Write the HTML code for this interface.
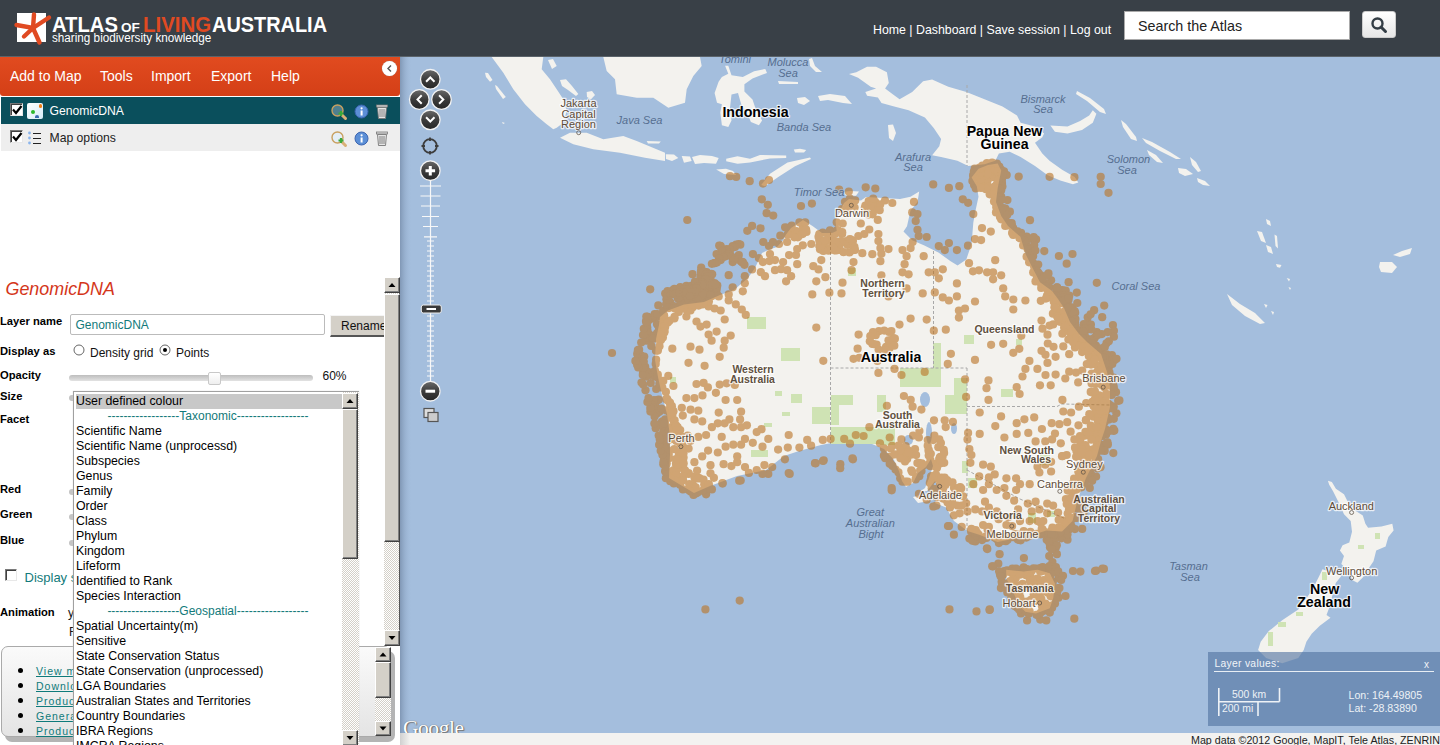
<!DOCTYPE html>
<html><head><meta charset="utf-8">
<style>
*{margin:0;padding:0;box-sizing:border-box}
html,body{width:1440px;height:745px;overflow:hidden;background:#fff;font-family:"Liberation Sans",sans-serif}
.abs{position:absolute}
.t{position:absolute;white-space:nowrap;line-height:1}
#hdr{position:absolute;left:0;top:0;width:1440px;height:56px;background:#394047}
#hdrline{position:absolute;left:0;top:56px;width:1440px;height:1px;background:#5b636a}
#menu{position:absolute;left:0;top:57px;width:400px;height:39px;background:linear-gradient(#e14b1f,#d43f17);border-radius:0 0 3px 3px}
#menu .t{color:#fff;font-size:14px}
.row1{position:absolute;left:1px;top:97px;width:399px;height:27px;background:#0a4f5c}
.row2{position:absolute;left:1px;top:124px;width:399px;height:27px;background:#eeeeee}
.cb{position:absolute;width:13px;height:13px;background:#fff;border:1px solid #777;border-right-color:#e8e8e8;border-bottom-color:#e8e8e8;box-shadow:inset 1px 1px 0 #404040}
.lbl{position:absolute;font-weight:bold;font-size:11.2px;color:#000;white-space:nowrap;line-height:1}
.sel .t{font-size:12px;color:#000}
.sbtn{background:#d4d0c8;border-top:1px solid #fff;border-left:1px solid #fff;border-right:1px solid #404040;border-bottom:1px solid #404040;box-shadow:inset -1px -1px 0 #808080}
.lnk{position:absolute;left:36px;font-size:10.5px;letter-spacing:1px;color:#0e7a7a;text-decoration:underline;white-space:nowrap;line-height:1}
</style></head>
<body>
<div id="hdr"></div>
<div id="hdrline"></div>
<!-- logo -->
<div class="abs" style="left:17px;top:13px;width:29px;height:29px;background:#fff"></div>
<svg class="abs" style="left:0;top:0" width="60" height="50" viewBox="0 0 60 50">
 <g stroke="#e04a22" stroke-width="4.4" stroke-linecap="round" fill="none">
  <path d="M16.5 25 L33 28 L49 17.5"/><path d="M33 28 L34 14.5"/><path d="M33 28 L39.5 42.5"/><path d="M33 28 L24 36.5"/>
 </g>
</svg>
<div class="t" style="left:52px;top:13.5px;font-size:22px;font-weight:bold;color:#fff;transform:scaleX(0.92);transform-origin:0 0">ATLAS</div>
<div class="t" style="left:121px;top:20.5px;font-size:13px;font-weight:bold;color:#fff;transform:scaleX(1.05);transform-origin:0 0">OF</div>
<div class="t" style="left:142.5px;top:13.5px;font-size:22px;font-weight:bold;color:#e04a22;transform:scaleX(0.93);transform-origin:0 0">LIVING</div>
<div class="t" style="left:212px;top:13.5px;font-size:22px;font-weight:bold;color:#fff;transform:scaleX(0.905);transform-origin:0 0">AUSTRALIA</div>
<div class="t" style="left:52px;top:32px;font-size:12px;color:#fff;transform:scaleX(0.975);transform-origin:0 0">sharing biodiversity knowledge</div>
<!-- nav -->
<div class="t" style="left:873px;top:24px;font-size:12.35px;color:#fff">Home | Dashboard | Save session | Log out</div>
<div class="abs" style="left:1124px;top:11px;width:226px;height:29px;background:#fff;border:1px solid #aaa"></div>
<div class="t" style="left:1138px;top:19px;font-size:14.3px;color:#222">Search the Atlas</div>
<div class="abs" style="left:1362px;top:11px;width:34px;height:27px;background:linear-gradient(#fff,#e6e6e6);border-radius:3px;border:1px solid #ccc"></div>
<svg class="abs" style="left:1368px;top:14px" width="22" height="22" viewBox="0 0 22 22"><circle cx="9.5" cy="9.5" r="5" fill="none" stroke="#333d45" stroke-width="2.4"/><path d="M13 13 L17.5 17.5" stroke="#333d45" stroke-width="3" stroke-linecap="round"/></svg>

<!-- menu -->
<div id="menu">
 <div class="t" style="left:10px;top:12px">Add to Map</div>
 <div class="t" style="left:100px;top:12px">Tools</div>
 <div class="t" style="left:151px;top:12px">Import</div>
 <div class="t" style="left:211px;top:12px">Export</div>
 <div class="t" style="left:271px;top:12px">Help</div>
 <div class="abs" style="left:382px;top:4px;width:15px;height:15px;border-radius:50%;background:#fff;box-shadow:0 0 1px #999"></div>
 <svg class="abs" style="left:384px;top:6px" width="11" height="11"><path d="M7 2.5 L4 5.5 L7 8.5" stroke="#555" stroke-width="1.4" fill="none"/></svg>
</div>

<!-- layer rows -->
<div class="row1"></div>
<div class="row2"></div>
<div class="cb" style="left:10px;top:103px"></div>
<div class="cb" style="left:10px;top:130px"></div>


<!-- row icons -->
<svg class="abs" style="left:10px;top:103px" width="14" height="14"><path d="M3 6.5 L6 10 L11.5 3" stroke="#000" stroke-width="2.2" fill="none"/></svg>
<svg class="abs" style="left:10px;top:130px" width="14" height="14"><path d="M3 6.5 L6 10 L11.5 3" stroke="#000" stroke-width="2.2" fill="none"/></svg>
<div class="abs" style="left:27px;top:103px;width:16px;height:16px;border-radius:2px;background:linear-gradient(135deg,#ffffff,#d6ecf8)"></div>
<div class="abs" style="left:38.5px;top:104px;width:3.5px;height:3.5px;border-radius:50%;background:#f07c10"></div>
<div class="abs" style="left:31px;top:110px;width:4px;height:4px;border-radius:50%;background:#2eb82e"></div>
<div class="abs" style="left:35px;top:115px;width:4px;height:3px;border-radius:2px 2px 0 0;background:#3a6ab0"></div>
<div class="t" style="left:49.5px;top:104.5px;font-size:12.2px;color:#fff">GenomicDNA</div>
<svg class="abs" style="left:27px;top:131px" width="16" height="16">
 <g fill="#8ab4ec"><circle cx="2.5" cy="2" r="1.4"/><circle cx="2.5" cy="7" r="1.4"/><circle cx="2.5" cy="12" r="1.4"/></g>
 <g stroke="#222" stroke-width="1"><path d="M6 2.5 H14 M6 7.5 H14 M6 12.5 H14"/></g>
</svg>
<div class="t" style="left:49.5px;top:131.5px;font-size:12.2px;color:#222">Map options</div>
<!-- right icons -->
<svg class="abs" style="left:330px;top:103px" width="18" height="18"><circle cx="7.5" cy="7.5" r="5.5" fill="#4f7f8f" stroke="#c9a060" stroke-width="1.4"/><path d="M11 11 L15.5 15.5" stroke="#d8b078" stroke-width="3" stroke-linecap="round"/><path d="M8.5 10.5 H13.5 M11 8 V13" stroke="#39a839" stroke-width="2.2"/></svg>
<svg class="abs" style="left:330px;top:130px" width="18" height="18"><circle cx="7.5" cy="7.5" r="5.5" fill="#e4eef6" stroke="#c9a060" stroke-width="1.4"/><path d="M11 11 L15.5 15.5" stroke="#d8b078" stroke-width="3" stroke-linecap="round"/><path d="M8.5 10.5 H13.5 M11 8 V13" stroke="#39a839" stroke-width="2.2"/></svg>
<svg class="abs" style="left:354px;top:104px" width="15" height="15"><circle cx="7.5" cy="7.5" r="6.5" fill="#5b8fd6" stroke="#3a64b0" stroke-width="1"/><rect x="6.6" y="6.5" width="2" height="5" fill="#fff"/><circle cx="7.6" cy="4.3" r="1.1" fill="#fff"/></svg>
<svg class="abs" style="left:354px;top:131px" width="15" height="15"><circle cx="7.5" cy="7.5" r="6.5" fill="#5b8fd6" stroke="#3a64b0" stroke-width="1"/><rect x="6.6" y="6.5" width="2" height="5" fill="#fff"/><circle cx="7.6" cy="4.3" r="1.1" fill="#fff"/></svg>
<svg class="abs" style="left:375px;top:103px" width="14" height="17"><rect x="1.5" y="2" width="11" height="2" fill="#ddd" stroke="#777" stroke-width=".8"/><path d="M2.5 4.5 L3.5 15.5 H10.5 L11.5 4.5 Z" fill="#e6e6e6" stroke="#777" stroke-width=".9"/><path d="M5 6 V14 M7 6 V14 M9 6 V14" stroke="#777" stroke-width=".9"/></svg>
<svg class="abs" style="left:375px;top:130px" width="14" height="17"><rect x="1.5" y="2" width="11" height="2" fill="#ddd" stroke="#777" stroke-width=".8"/><path d="M2.5 4.5 L3.5 15.5 H10.5 L11.5 4.5 Z" fill="#e6e6e6" stroke="#777" stroke-width=".9"/><path d="M5 6 V14 M7 6 V14 M9 6 V14" stroke="#777" stroke-width=".9"/></svg>

<!-- form area -->
<div class="t" style="left:5.5px;top:281.2px;font-size:17.9px;font-style:italic;color:#d4361a">GenomicDNA</div>
<div class="lbl" style="left:0;top:316px">Layer name</div>
<div class="abs" style="left:70px;top:314px;width:255px;height:21px;border:1px solid #bbb;border-radius:2px;background:#fff"></div>
<div class="t" style="left:75.5px;top:319px;font-size:12px;color:#127a7a">GenomicDNA</div>
<div class="abs" style="left:330px;top:314.5px;width:60px;height:22px;background:#d4d0c8;border-top:1px solid #f4f4f4;border-left:1px solid #f4f4f4;border-bottom:2px solid #555;"></div>
<div class="t" style="left:341px;top:320px;font-size:12px;color:#111">Rename</div>
<div class="lbl" style="left:0;top:346px">Display as</div>
<svg class="abs" style="left:73px;top:344px" width="13" height="13"><circle cx="6" cy="6" r="5" fill="#fff" stroke="#666" stroke-width="1"/></svg>
<div class="t" style="left:90px;top:347px;font-size:12px;color:#111">Density grid</div>
<svg class="abs" style="left:159px;top:344px" width="13" height="13"><circle cx="6" cy="6" r="5" fill="#fff" stroke="#666" stroke-width="1"/><circle cx="6" cy="6" r="2" fill="#000"/></svg>
<div class="t" style="left:176px;top:347px;font-size:12px;color:#111">Points</div>
<div class="lbl" style="left:0;top:370px">Opacity</div>
<div class="abs" style="left:69px;top:375px;width:244px;height:6px;border-radius:3px;background:linear-gradient(#bdbdbd,#e2e2e2)"></div>
<div class="abs" style="left:208px;top:371.5px;width:13px;height:13px;border:1px solid #c8c8c8;border-radius:2px;background:linear-gradient(#fff,#eee)"></div>
<div class="t" style="left:322.5px;top:369.5px;font-size:12px;color:#111">60%</div>
<div class="lbl" style="left:0;top:391px">Size</div>
<div class="lbl" style="left:0;top:413.5px">Facet</div>
<div class="lbl" style="left:0;top:483.5px">Red</div>
<div class="lbl" style="left:0;top:508.5px">Green</div>
<div class="lbl" style="left:0;top:534.5px">Blue</div>
<div class="abs" style="left:69px;top:395px;width:8px;height:6px;border-radius:3px;background:#c4c4c4"></div>
<div class="abs" style="left:69px;top:489px;width:8px;height:6px;border-radius:3px;background:#c4c4c4"></div>
<div class="abs" style="left:69px;top:514px;width:8px;height:6px;border-radius:3px;background:#c4c4c4"></div>
<div class="abs" style="left:69px;top:540px;width:8px;height:6px;border-radius:3px;background:#c4c4c4"></div>
<div class="abs" style="left:4.5px;top:568.5px;width:12px;height:12px;border:1px solid #7a7a7a;border-right-color:#e8e8e8;border-bottom-color:#e8e8e8;box-shadow:inset 1px 1px 0 #404040;background:#fff"></div>
<div class="t" style="left:24.5px;top:571px;font-size:13px;color:#127a7a">Display s</div>
<div class="lbl" style="left:0;top:607px">Animation</div>
<div class="t" style="left:68px;top:607px;font-size:12px;color:#111">y</div>
<div class="t" style="left:69px;top:626px;font-size:12px;color:#111">F</div>
<!-- panel scrollbar -->
<div class="abs" style="left:384px;top:277px;width:16px;height:369px;background:repeating-conic-gradient(#d4d0c8 0 25%,#ffffff 0 50%) 0 0/2px 2px;border-right:1px solid #555"></div>
<div class="sbtn abs" style="left:384px;top:277px;width:16px;height:16px"></div>
<div class="sbtn abs" style="left:384px;top:293.5px;width:16px;height:248px"></div>
<div class="sbtn abs" style="left:384px;top:630px;width:16px;height:16px"></div>
<svg class="abs" style="left:384px;top:277px" width="16" height="16"><path d="M4.5 10 L8 6 L11.5 10 Z" fill="#000"/></svg>
<svg class="abs" style="left:384px;top:630px" width="16" height="16"><path d="M4.5 6 L8 10 L11.5 6 Z" fill="#000"/></svg>

<!-- links box -->
<div class="abs" style="left:5px;top:651px;width:390px;height:91px;border-radius:7px;background:#b4b4b4"></div>
<div class="abs" style="left:1px;top:646px;width:390px;height:91px;border-radius:7px;border:1px solid #aaa;background:linear-gradient(#fafafa,#e4e4e4)"></div>
<div class="abs" style="left:375px;top:647px;width:16px;height:89px;background:repeating-conic-gradient(#d4d0c8 0 25%,#ffffff 0 50%) 0 0/2px 2px"></div>
<div class="sbtn abs" style="left:375px;top:647px;width:16px;height:15px"></div>
<div class="sbtn abs" style="left:375px;top:662px;width:16px;height:36px"></div>
<div class="sbtn abs" style="left:375px;top:721px;width:16px;height:15px"></div>
<svg class="abs" style="left:375px;top:647px" width="16" height="15"><path d="M4.5 9.5 L8 5.5 L11.5 9.5 Z" fill="#000"/></svg>
<svg class="abs" style="left:375px;top:721px" width="16" height="15"><path d="M4.5 5.5 L8 9.5 L11.5 5.5 Z" fill="#000"/></svg>
<div class="abs" style="left:18px;top:667.5px;width:5px;height:5px;border-radius:50%;background:#000"></div>
<div class="abs" style="left:18px;top:682.5px;width:5px;height:5px;border-radius:50%;background:#000"></div>
<div class="abs" style="left:18px;top:697.5px;width:5px;height:5px;border-radius:50%;background:#000"></div>
<div class="abs" style="left:18px;top:712.5px;width:5px;height:5px;border-radius:50%;background:#000"></div>
<div class="abs" style="left:18px;top:727.5px;width:5px;height:5px;border-radius:50%;background:#000"></div>
<div class="lnk" style="top:665.5px">View metadata</div>
<div class="lnk" style="top:680.5px">Download</div>
<div class="lnk" style="top:695.5px">Produce</div>
<div class="lnk" style="top:710.5px">Generate</div>
<div class="lnk" style="top:725.5px">Produce</div>

<!-- listbox -->
<div class="abs sel" style="left:73px;top:390.5px;width:286px;height:360px;background:#fff;border:1px solid #a0a0a0;border-right:none;box-shadow:0 0 1px #ccc">
 <div class="abs" style="left:2px;top:2px;width:266px;height:15px;background:#c8c8c8"></div>
 <div class="t" style="left:2px;top:3.5px;font-size:12.35px;color:#000">User defined colour</div><div class="t" style="left:0;width:268px;text-align:center;top:18.5px;font-size:12px;color:#127a7a">------------------Taxonomic------------------</div><div class="t" style="left:2px;top:33.5px;font-size:12.35px;color:#000">Scientific Name</div><div class="t" style="left:2px;top:48.5px;font-size:12.35px;color:#000">Scientific Name (unprocessd)</div><div class="t" style="left:2px;top:63.5px;font-size:12.35px;color:#000">Subspecies</div><div class="t" style="left:2px;top:78.5px;font-size:12.35px;color:#000">Genus</div><div class="t" style="left:2px;top:93.5px;font-size:12.35px;color:#000">Family</div><div class="t" style="left:2px;top:108.5px;font-size:12.35px;color:#000">Order</div><div class="t" style="left:2px;top:123.5px;font-size:12.35px;color:#000">Class</div><div class="t" style="left:2px;top:138.5px;font-size:12.35px;color:#000">Phylum</div><div class="t" style="left:2px;top:153.5px;font-size:12.35px;color:#000">Kingdom</div><div class="t" style="left:2px;top:168.5px;font-size:12.35px;color:#000">Lifeform</div><div class="t" style="left:2px;top:183.5px;font-size:12.35px;color:#000">Identified to Rank</div><div class="t" style="left:2px;top:198.5px;font-size:12.35px;color:#000">Species Interaction</div><div class="t" style="left:0;width:268px;text-align:center;top:213.5px;font-size:12px;color:#127a7a">------------------Geospatial------------------</div><div class="t" style="left:2px;top:228.5px;font-size:12.35px;color:#000">Spatial Uncertainty(m)</div><div class="t" style="left:2px;top:243.5px;font-size:12.35px;color:#000">Sensitive</div><div class="t" style="left:2px;top:258.5px;font-size:12.35px;color:#000">State Conservation Status</div><div class="t" style="left:2px;top:273.5px;font-size:12.35px;color:#000">State Conservation (unprocessed)</div><div class="t" style="left:2px;top:288.5px;font-size:12.35px;color:#000">LGA Boundaries</div><div class="t" style="left:2px;top:303.5px;font-size:12.35px;color:#000">Australian States and Territories</div><div class="t" style="left:2px;top:318.5px;font-size:12.35px;color:#000">Country Boundaries</div><div class="t" style="left:2px;top:333.5px;font-size:12.35px;color:#000">IBRA Regions</div><div class="t" style="left:2px;top:348.5px;font-size:12.35px;color:#000">IMCRA Regions</div>
 <div class="abs" style="left:268px;top:0;width:17px;height:360px;background:repeating-conic-gradient(#d4d0c8 0 25%,#ffffff 0 50%) 0 0/2px 2px"></div>
 <div class="sbtn abs" style="left:268px;top:1px;width:16px;height:16px"></div>
 <div class="sbtn abs" style="left:268px;top:17px;width:16px;height:150px"></div>
 <div class="sbtn abs" style="left:268px;top:338px;width:16px;height:16px"></div>
 <svg class="abs" style="left:268px;top:1px" width="16" height="16"><path d="M4.5 10 L8 6 L11.5 10 Z" fill="#000"/></svg>
 <svg class="abs" style="left:268px;top:338px" width="16" height="16"><path d="M4.5 6 L8 10 L11.5 6 Z" fill="#000"/></svg>
</div>

<svg class="abs" style="left:400px;top:57px" width="1040" height="676" viewBox="400 57 1040 676">
<defs><linearGradient id="lsh" x1="0" x2="1"><stop offset="0" stop-color="#8097b5"/><stop offset="1" stop-color="#a4bedd" stop-opacity="0"/></linearGradient></defs>
<rect x="400" y="57" width="1040" height="676" fill="#a4bedd"/>
<polygon points="793.8,149.5 800.0,148.8 806.2,150.0 804.0,152.5 795.0,152.5" fill="#f3f2ee"/>
<polygon points="842.7,192.0 850.0,190.9 859.0,191.5 856.0,195.7 845.0,195.5" fill="#f3f2ee"/>
<polygon points="888.0,125.0 893.0,124.6 896.0,133.0 893.0,140.9 889.0,138.0" fill="#f3f2ee"/>
<polygon points="646.7,141.0 660.8,141.5 659.0,143.5 648.0,143.5" fill="#f3f2ee"/>
<polygon points="660.0,317.0 668.0,310.5 684.0,304.4 704.0,302.0 720.0,295.0 734.0,290.0 748.0,278.0 755.0,268.0 762.0,253.0 768.0,250.0 777.0,247.0 783.0,240.5 786.0,234.5 791.0,228.0 803.0,220.0 812.5,226.0 822.0,233.0 832.0,233.0 836.7,231.0 835.5,221.0 840.0,211.0 844.0,203.0 849.0,199.0 861.0,200.5 866.0,197.0 883.0,198.0 900.0,199.0 910.5,196.7 919.2,191.4 917.5,201.9 910.5,210.6 907.0,226.3 903.5,231.6 912.2,240.3 924.4,245.5 938.4,252.5 950.6,261.2 957.6,265.6 966.3,259.5 971.6,243.8 973.3,222.8 975.1,212.4 978.5,196.7 976.8,186.2 971.6,177.5 978.5,168.7 988.0,165.0 997.7,163.5 1001.2,170.5 997.7,187.9 996.0,201.9 1001.2,215.9 1008.0,226.0 1020.4,236.8 1025.7,254.3 1032.7,268.2 1040.0,282.2 1052.0,291.0 1058.0,299.0 1064.0,308.0 1070.0,322.0 1079.0,334.0 1087.0,342.0 1101.0,354.0 1107.0,372.0 1110.0,387.0 1110.0,407.0 1105.0,429.0 1101.0,441.0 1097.0,456.0 1086.0,478.0 1078.0,498.0 1074.0,515.0 1072.5,521.0 1062.0,531.4 1046.3,530.5 1032.4,534.9 1014.9,538.4 997.5,541.9 980.0,535.0 967.5,531.0 954.0,521.0 946.0,507.5 935.0,503.0 937.0,497.0 939.0,488.0 935.0,481.0 927.0,491.0 921.0,491.0 925.0,488.0 929.0,478.0 933.0,466.0 931.0,459.0 926.0,467.0 918.0,473.0 913.0,483.0 906.0,487.0 902.0,481.0 899.0,471.0 894.0,460.0 884.0,449.0 872.0,444.0 860.0,442.0 842.0,441.0 821.0,445.0 799.0,451.0 784.0,456.0 766.0,470.0 737.0,476.0 710.0,486.0 694.0,493.0 669.0,478.0 670.0,455.0 670.0,436.0 667.0,414.0 662.0,395.0 658.0,377.0 655.0,360.0 656.0,339.0 659.0,325.0" fill="#f3f2ee"/>
<polygon points="1006.2,569.8 1023.6,571.6 1037.6,569.8 1049.8,573.3 1055.0,583.8 1053.3,597.7 1049.8,608.2 1035.9,613.5 1025.4,611.7 1018.4,604.7 1011.4,587.3 1006.2,578.5" fill="#f3f2ee"/>
<polygon points="913.0,497.0 920.0,495.0 930.0,496.0 929.0,501.0 918.0,503.0" fill="#f3f2ee"/>
<polygon points="856.3,72.3 867.1,66.8 876.1,66.8 886.9,72.3 888.8,83.1 885.1,88.5 892.4,93.9 899.6,99.3 912.2,92.1 923.1,81.3 932.1,79.5 948.3,86.7 966.4,92.1 984.5,99.3 1002.5,106.6 1017.0,115.6 1020.6,122.8 1035.0,126.4 1044.1,133.6 1042.3,137.3 1035.0,142.7 1042.3,153.5 1049.5,160.7 1062.1,169.8 1074.7,177.0 1078.3,182.4 1072.9,184.2 1060.3,180.6 1047.7,175.2 1035.0,166.1 1020.6,157.1 1009.7,151.7 998.9,153.5 995.3,160.7 984.5,164.3 968.2,166.1 957.4,160.7 941.1,157.1 932.1,155.3 939.3,146.3 941.1,139.1 933.9,128.2 924.9,117.4 908.6,110.2 894.2,106.6 881.5,102.9 877.9,97.5 867.1,95.7 865.3,92.1 876.1,88.5 870.7,86.7 858.1,77.7 849.0,74.1" fill="#f3f2ee"/>
<polygon points="1050.4,125.5 1067.5,126.4 1080.1,121.0 1089.2,115.6 1092.8,110.2 1096.4,113.8 1092.8,122.8 1082.0,130.0 1067.5,133.6 1054.9,131.8" fill="#f3f2ee"/>
<polygon points="1077.0,91.0 1090.0,98.0 1104.0,109.0 1106.0,114.0 1100.0,112.0 1087.0,101.0 1076.0,94.0" fill="#f3f2ee"/>
<polygon points="491.7,57.0 503.3,72.7 513.3,89.3 525.0,104.3 536.7,116.0 546.7,124.3 553.3,129.3 556.7,127.7 563.3,122.7 566.7,111.0 563.3,99.3 556.7,89.3 550.0,79.3 541.7,69.3 543.3,57.0" fill="#f3f2ee"/>
<polygon points="560.0,80.0 566.0,79.3 572.0,86.0 578.3,94.0 576.0,96.0 568.0,90.0 562.0,86.0" fill="#f3f2ee"/>
<polygon points="586.7,92.0 592.0,91.0 595.0,95.0 591.0,99.3 587.0,97.0" fill="#f3f2ee"/>
<polygon points="603.3,57.0 606.7,71.0 615.0,79.3 616.7,94.3 636.7,97.7 653.3,97.7 668.3,107.7 685.0,102.7 686.7,89.3 693.3,76.0 701.7,66.0 700.0,57.0" fill="#f3f2ee"/>
<polygon points="560.0,137.7 570.0,132.7 586.7,132.7 603.3,139.3 623.3,136.0 636.7,141.0 665.0,152.7 665.0,161.0 645.0,157.7 620.0,152.7 593.3,149.3 573.3,144.3" fill="#f3f2ee"/>
<polygon points="665.8,154.3 674.0,154.5 678.3,158.0 672.0,161.0 666.0,159.0" fill="#f3f2ee"/>
<polygon points="681.7,156.0 690.0,156.5 691.7,161.0 684.0,162.7" fill="#f3f2ee"/>
<polygon points="692.0,157.0 700.0,155.0 712.0,156.0 718.7,158.0 716.0,163.7 704.0,163.0 695.0,164.0" fill="#f3f2ee"/>
<polygon points="726.2,158.8 737.5,156.2 750.0,158.8 760.0,155.0 786.2,155.6 786.2,158.1 770.0,158.5 750.0,162.5 737.5,163.8 726.2,161.2" fill="#f3f2ee"/>
<polygon points="716.2,169.5 726.0,168.8 733.0,171.0 736.2,175.0 724.0,174.0" fill="#f3f2ee"/>
<polygon points="761.2,185.0 770.0,173.8 787.5,162.5 810.0,157.5 811.0,159.0 795.0,166.2 777.5,177.5 765.0,186.2" fill="#f3f2ee"/>
<polygon points="725.1,65.7 728.3,73.7 721.9,76.9 718.6,81.8 714.6,93.0 717.0,102.7 721.9,104.3 720.3,112.4 721.9,125.2 728.3,126.9 731.5,120.4 729.9,109.1 731.5,94.6 738.0,93.0 741.2,104.3 747.6,114.0 750.9,122.0 758.9,125.2 762.1,120.4 755.7,109.1 752.5,99.5 744.4,91.4 744.4,84.2 752.5,78.5 767.0,72.9 765.3,68.9 754.1,71.3 742.8,76.9 731.5,75.3 728.3,65.7" fill="#f3f2ee"/>
<polygon points="809.0,59.0 812.0,58.0 815.0,66.0 822.0,72.0 816.0,72.0 810.0,66.0" fill="#f3f2ee"/>
<polygon points="818.0,96.0 830.0,94.0 845.0,96.0 852.0,104.0 843.0,103.0 828.0,100.0 820.0,101.0" fill="#f3f2ee"/>
<polygon points="797.0,98.0 805.0,97.0 810.0,101.0 804.0,105.0 798.0,103.0" fill="#f3f2ee"/>
<polygon points="778.0,81.0 798.0,82.0 798.0,84.0 779.0,84.0" fill="#f3f2ee"/>
<polygon points="1121.0,120.0 1126.0,124.0 1136.0,137.0 1137.0,141.0 1131.0,139.0 1123.0,127.0" fill="#f3f2ee"/>
<polygon points="1142.0,138.0 1152.0,142.0 1170.0,152.0 1181.0,159.0 1176.0,159.0 1160.0,151.0 1146.0,143.0" fill="#f3f2ee"/>
<polygon points="1190.0,157.0 1196.0,162.0 1201.0,171.0 1198.0,172.0 1192.0,165.0" fill="#f3f2ee"/>
<polygon points="1178.0,168.0 1186.0,169.0 1193.0,174.0 1185.0,176.0 1179.0,173.0" fill="#f3f2ee"/>
<polygon points="1197.0,178.0 1205.0,181.0 1210.0,186.0 1203.0,185.0 1198.0,182.0" fill="#f3f2ee"/>
<polygon points="1147.0,150.0 1156.0,155.0 1163.0,163.0 1157.0,162.0 1149.0,155.0" fill="#f3f2ee"/>
<polygon points="1227.0,294.0 1240.0,304.0 1255.0,313.0 1265.0,323.0 1260.0,324.0 1245.0,316.0 1232.0,305.0" fill="#f3f2ee"/>
<polygon points="1380.0,262.0 1392.0,262.0 1397.0,267.0 1392.0,273.0 1381.0,272.0 1379.0,267.0" fill="#f3f2ee"/>
<polygon points="1393.0,255.0 1402.0,251.0 1412.0,248.0 1410.0,254.0 1400.0,257.0" fill="#f3f2ee"/>
<polygon points="1327.9,480.7 1331.9,482.1 1335.9,488.8 1344.0,494.2 1348.0,502.2 1354.7,510.3 1362.8,515.6 1365.4,523.7 1368.1,527.7 1381.5,526.4 1392.3,523.7 1393.6,530.4 1388.3,537.1 1385.6,546.5 1376.2,550.5 1373.5,561.3 1368.1,569.3 1362.8,577.4 1357.4,582.8 1352.0,580.1 1349.3,572.0 1341.3,564.0 1344.0,555.9 1339.9,550.5 1342.6,545.2 1349.3,542.5 1352.0,531.7 1350.7,521.0 1344.0,514.3 1338.6,502.2 1333.2,491.5 1329.2,484.8" fill="#f3f2ee"/>
<polygon points="1322.5,569.3 1330.5,572.0 1341.3,576.0 1335.9,582.8 1333.2,590.8 1330.5,604.2 1326.5,615.0 1330.5,617.7 1319.8,625.7 1311.7,633.8 1306.4,641.8 1303.7,649.9 1298.3,657.9 1282.2,663.3 1266.1,657.9 1258.1,649.9 1260.7,641.8 1268.8,631.1 1282.2,620.3 1298.3,609.6 1311.7,590.8 1318.5,577.4" fill="#f3f2ee"/>
<polygon points="1257.0,231.0 1262.0,232.0 1266.0,243.0 1261.0,241.0" fill="#f3f2ee"/>
<polygon points="1266.0,245.0 1271.0,247.0 1273.0,254.0 1268.0,252.0" fill="#f3f2ee"/>
<polygon points="1274.5,234.5 1277.0,236.0 1278.0,248.5 1275.5,246.0" fill="#f3f2ee"/>
<polygon points="1276.0,264.0 1281.5,265.0 1280.0,267.7 1277.0,267.0" fill="#f3f2ee"/>
<polygon points="1286.7,278.0 1290.0,279.0 1289.0,281.6" fill="#f3f2ee"/>
<polygon points="1288.5,287.0 1291.0,288.0 1290.0,290.0" fill="#f3f2ee"/>
<polygon points="1266.0,219.0 1270.0,221.0 1271.0,226.0 1267.0,224.0" fill="#f3f2ee"/>
<polygon points="1264.0,304.0 1267.5,305.0 1266.0,308.0" fill="#f3f2ee"/>
<polygon points="1271.0,311.0 1274.0,312.0 1273.0,315.0" fill="#f3f2ee"/>
<polygon points="485.0,72.7 488.0,73.0 492.5,80.0 490.0,81.8 486.0,77.0" fill="#f3f2ee"/>
<polygon points="495.0,85.0 497.0,86.0 505.8,97.0 503.0,99.0 496.0,89.0" fill="#f3f2ee"/>
<polygon points="548.0,60.0 553.0,59.0 556.7,66.0 552.0,69.0" fill="#f3f2ee"/>
<polygon points="502.0,122.0 505.0,123.0 503.0,124.0" fill="#f3f2ee"/>
<rect x="747" y="317" width="19" height="12" fill="#cfe3b4"/>
<rect x="781" y="348" width="19" height="13" fill="#cfe3b4"/>
<rect x="812" y="407" width="18" height="17" fill="#cfe3b4"/>
<rect x="831" y="395" width="22" height="10" fill="#cfe3b4"/>
<rect x="831" y="395" width="8" height="30" fill="#cfe3b4"/>
<rect x="877" y="395" width="9" height="17" fill="#cfe3b4"/>
<rect x="791" y="394" width="11" height="9" fill="#cfe3b4"/>
<rect x="775" y="391" width="7" height="5" fill="#cfe3b4"/>
<rect x="670" y="377" width="6" height="6" fill="#cfe3b4"/>
<rect x="831" y="427" width="64" height="17" fill="#cfe3b4"/>
<rect x="751" y="450" width="17" height="7" fill="#cfe3b4"/>
<rect x="782" y="412" width="8" height="4" fill="#cfe3b4"/>
<rect x="764" y="423" width="8" height="4" fill="#cfe3b4"/>
<rect x="880" y="430" width="15" height="15" fill="#cfe3b4"/>
<rect x="962" y="461" width="6" height="12" fill="#cfe3b4"/>
<rect x="968" y="478" width="9" height="10" fill="#cfe3b4"/>
<rect x="1028" y="513" width="8" height="10" fill="#cfe3b4"/>
<rect x="1047" y="511" width="8" height="6" fill="#cfe3b4"/>
<rect x="900" y="368" width="41" height="19" fill="#cfe3b4"/>
<rect x="933" y="343" width="8" height="25" fill="#cfe3b4"/>
<rect x="954" y="378" width="13" height="36" fill="#cfe3b4"/>
<rect x="945" y="395" width="17" height="19" fill="#cfe3b4"/>
<rect x="964" y="335" width="10" height="9" fill="#cfe3b4"/>
<rect x="1001" y="389" width="12" height="8" fill="#cfe3b4"/>
<rect x="1040" y="455" width="10" height="10" fill="#cfe3b4"/>
<rect x="848" y="268" width="8" height="8" fill="#cfe3b4"/>
<rect x="1016" y="339" width="6" height="6" fill="#cfe3b4"/>
<rect x="1375" y="533" width="5" height="6" fill="#cfe3b4"/>
<rect x="1358" y="545" width="6" height="4" fill="#cfe3b4"/>
<rect x="1322" y="572" width="5" height="8" fill="#cfe3b4"/>
<rect x="1268" y="632" width="5" height="14" fill="#cfe3b4"/>
<rect x="1278" y="622" width="8" height="5" fill="#cfe3b4"/>
<rect x="1296" y="612" width="7" height="4" fill="#cfe3b4"/>
<ellipse cx="925.0" cy="399.5" rx="5.0" ry="7.5" fill="#a4bedd"/>
<ellipse cx="929.0" cy="433.0" rx="3.0" ry="11.0" fill="#a4bedd"/>
<ellipse cx="954.0" cy="428.5" rx="3.0" ry="5.5" fill="#a4bedd"/>
<ellipse cx="908.5" cy="440.0" rx="4.5" ry="5.0" fill="#a4bedd"/>
<g stroke="#a8a8a8" stroke-width="1" stroke-dasharray="3,2" fill="none">
<path d="M830.5 232 V444 M830.5 368 H967 M933.5 251 V368 M967 368 V531 M967 406.5 H1057 L1062 404 L1110 405 M1020 499 L1066 519 M967 470 L1020 499"/>
<path d="M967 85 V166"/>
</g>
<rect x="400" y="57" width="12" height="676" fill="url(#lsh)"/>
<g opacity="0.62" fill="#bb7628"><circle cx="720.7" cy="246.0" r="4.1"/><circle cx="726.7" cy="249.1" r="4.1"/><circle cx="732.7" cy="246.0" r="4.1"/><circle cx="738.8" cy="244.0" r="4.1"/><circle cx="729.7" cy="254.1" r="4.1"/><circle cx="738.8" cy="255.1" r="4.1"/><circle cx="716.6" cy="254.1" r="4.1"/><circle cx="714.6" cy="263.2" r="4.1"/><circle cx="720.7" cy="260.1" r="4.1"/><circle cx="732.7" cy="262.1" r="4.1"/><circle cx="742.8" cy="262.1" r="4.1"/><circle cx="728.7" cy="275.2" r="4.1"/><circle cx="744.8" cy="276.2" r="4.1"/><circle cx="700.5" cy="276.2" r="4.1"/><circle cx="706.6" cy="272.2" r="4.1"/><circle cx="692.5" cy="274.2" r="4.1"/><circle cx="696.5" cy="282.3" r="4.1"/><circle cx="712.6" cy="283.3" r="4.1"/><circle cx="732.7" cy="287.3" r="4.1"/><circle cx="744.8" cy="283.3" r="4.1"/><circle cx="742.8" cy="291.3" r="4.1"/><circle cx="650.2" cy="289.3" r="4.1"/><circle cx="668.3" cy="292.3" r="4.1"/><circle cx="674.4" cy="290.3" r="4.1"/><circle cx="680.4" cy="296.4" r="4.1"/><circle cx="670.3" cy="302.4" r="4.1"/><circle cx="688.5" cy="290.3" r="4.1"/><circle cx="696.5" cy="290.3" r="4.1"/><circle cx="704.6" cy="288.3" r="4.1"/><circle cx="710.6" cy="290.3" r="4.1"/><circle cx="718.7" cy="296.4" r="4.1"/><circle cx="728.7" cy="294.4" r="4.1"/><circle cx="728.7" cy="300.4" r="4.1"/><circle cx="735.8" cy="304.4" r="4.1"/><circle cx="741.8" cy="309.5" r="4.1"/><circle cx="745.8" cy="314.9" r="4.1"/><circle cx="724.7" cy="319.5" r="4.1"/><circle cx="730.7" cy="335.6" r="4.1"/><circle cx="724.7" cy="340.7" r="4.1"/><circle cx="723.7" cy="347.7" r="4.1"/><circle cx="719.7" cy="356.8" r="4.1"/><circle cx="711.6" cy="340.7" r="4.1"/><circle cx="708.6" cy="334.6" r="4.1"/><circle cx="716.6" cy="331.6" r="4.1"/><circle cx="706.6" cy="324.6" r="4.1"/><circle cx="696.5" cy="321.5" r="4.1"/><circle cx="700.5" cy="326.6" r="4.1"/><circle cx="714.6" cy="308.5" r="4.1"/><circle cx="720.7" cy="310.5" r="4.1"/><circle cx="708.6" cy="306.4" r="4.1"/><circle cx="702.5" cy="304.4" r="4.1"/><circle cx="690.5" cy="310.5" r="4.1"/><circle cx="686.4" cy="316.5" r="4.1"/><circle cx="658.3" cy="305.4" r="4.1"/><circle cx="674.4" cy="318.5" r="4.1"/><circle cx="664.3" cy="332.6" r="4.1"/><circle cx="672.3" cy="348.7" r="4.1"/><circle cx="690.5" cy="346.7" r="4.1"/><circle cx="699.5" cy="349.7" r="4.1"/><circle cx="688.5" cy="362.8" r="4.1"/><circle cx="704.6" cy="365.8" r="4.1"/><circle cx="696.5" cy="384.0" r="4.1"/><circle cx="703.6" cy="382.9" r="4.1"/><circle cx="719.7" cy="384.6" r="4.1"/><circle cx="726.7" cy="383.3" r="4.1"/><circle cx="734.8" cy="385.0" r="4.1"/><circle cx="668.3" cy="375.9" r="4.1"/><circle cx="673.4" cy="386.0" r="4.1"/><circle cx="663.3" cy="380.9" r="4.1"/><circle cx="638.1" cy="360.8" r="4.1"/><circle cx="639.1" cy="349.7" r="4.1"/><circle cx="646.2" cy="340.7" r="4.1"/><circle cx="649.2" cy="334.6" r="4.1"/><circle cx="645.2" cy="366.8" r="4.1"/><circle cx="650.2" cy="374.9" r="4.1"/><circle cx="656.2" cy="389.0" r="4.1"/><circle cx="752.9" cy="254.1" r="4.1"/><circle cx="758.9" cy="258.1" r="4.1"/><circle cx="762.9" cy="262.1" r="4.1"/><circle cx="760.9" cy="272.2" r="4.1"/><circle cx="765.0" cy="276.2" r="4.1"/><circle cx="770.0" cy="254.1" r="4.1"/><circle cx="775.0" cy="260.1" r="4.1"/><circle cx="775.0" cy="270.2" r="4.1"/><circle cx="783.1" cy="262.1" r="4.1"/><circle cx="781.1" cy="269.2" r="4.1"/><circle cx="787.1" cy="270.2" r="4.1"/><circle cx="791.1" cy="276.2" r="4.1"/><circle cx="786.1" cy="281.3" r="4.1"/><circle cx="797.2" cy="264.2" r="4.1"/><circle cx="789.1" cy="255.1" r="4.1"/><circle cx="797.2" cy="249.1" r="4.1"/><circle cx="811.3" cy="244.0" r="4.1"/><circle cx="819.3" cy="246.0" r="4.1"/><circle cx="827.4" cy="248.1" r="4.1"/><circle cx="837.4" cy="244.0" r="4.1"/><circle cx="847.5" cy="245.0" r="4.1"/><circle cx="853.5" cy="250.1" r="4.1"/><circle cx="853.5" cy="262.1" r="4.1"/><circle cx="851.5" cy="270.2" r="4.1"/><circle cx="821.3" cy="260.1" r="4.1"/><circle cx="813.3" cy="266.2" r="4.1"/><circle cx="825.4" cy="277.2" r="4.1"/><circle cx="816.3" cy="281.3" r="4.1"/><circle cx="812.3" cy="294.4" r="4.1"/><circle cx="829.4" cy="292.7" r="4.1"/><circle cx="842.5" cy="282.7" r="4.1"/><circle cx="841.5" cy="293.4" r="4.1"/><circle cx="816.3" cy="327.6" r="4.1"/><circle cx="823.3" cy="360.8" r="4.1"/><circle cx="858.6" cy="334.6" r="4.1"/><circle cx="857.6" cy="348.7" r="4.1"/><circle cx="853.5" cy="358.8" r="4.1"/><circle cx="769.0" cy="246.0" r="4.1"/><circle cx="779.0" cy="244.0" r="4.1"/><circle cx="787.1" cy="242.0" r="4.1"/><circle cx="763.3" cy="242.0" r="4.1"/><circle cx="773.0" cy="242.0" r="4.1"/><circle cx="652.7" cy="318.4" r="4.1"/><circle cx="659.3" cy="316.4" r="4.1"/><circle cx="657.0" cy="324.1" r="4.1"/><circle cx="647.3" cy="327.8" r="4.1"/><circle cx="646.9" cy="325.8" r="4.1"/><circle cx="647.6" cy="316.9" r="4.1"/><circle cx="654.7" cy="336.1" r="4.1"/><circle cx="648.7" cy="320.3" r="4.1"/><circle cx="658.8" cy="339.3" r="4.1"/><circle cx="657.8" cy="324.9" r="4.1"/><circle cx="663.5" cy="322.1" r="4.1"/><circle cx="649.1" cy="317.6" r="4.1"/><circle cx="652.4" cy="335.9" r="4.1"/><circle cx="647.1" cy="316.8" r="4.1"/><circle cx="654.7" cy="314.0" r="4.1"/><circle cx="659.5" cy="315.2" r="4.1"/><circle cx="663.4" cy="320.9" r="4.1"/><circle cx="665.2" cy="326.7" r="4.1"/><circle cx="662.8" cy="332.0" r="4.1"/><circle cx="662.9" cy="337.4" r="4.1"/><circle cx="661.0" cy="339.4" r="4.1"/><circle cx="655.0" cy="338.4" r="4.1"/><circle cx="648.3" cy="337.7" r="4.1"/><circle cx="647.6" cy="331.4" r="4.1"/><circle cx="646.8" cy="326.1" r="4.1"/><circle cx="646.0" cy="321.1" r="4.1"/><circle cx="699.4" cy="287.6" r="4.1"/><circle cx="701.3" cy="300.0" r="4.1"/><circle cx="679.9" cy="294.5" r="4.1"/><circle cx="699.6" cy="286.8" r="4.1"/><circle cx="689.0" cy="289.9" r="4.1"/><circle cx="704.7" cy="289.0" r="4.1"/><circle cx="678.0" cy="294.6" r="4.1"/><circle cx="688.4" cy="297.9" r="4.1"/><circle cx="709.7" cy="292.2" r="4.1"/><circle cx="686.6" cy="293.9" r="4.1"/><circle cx="673.0" cy="290.0" r="4.1"/><circle cx="677.2" cy="291.2" r="4.1"/><circle cx="690.2" cy="298.8" r="4.1"/><circle cx="686.8" cy="294.1" r="4.1"/><circle cx="700.7" cy="297.2" r="4.1"/><circle cx="697.0" cy="300.6" r="4.1"/><circle cx="667.6" cy="291.2" r="4.1"/><circle cx="674.4" cy="288.9" r="4.1"/><circle cx="676.2" cy="289.1" r="4.1"/><circle cx="680.3" cy="287.2" r="4.1"/><circle cx="686.4" cy="285.9" r="4.1"/><circle cx="691.4" cy="285.8" r="4.1"/><circle cx="698.2" cy="287.7" r="4.1"/><circle cx="705.4" cy="286.5" r="4.1"/><circle cx="711.2" cy="288.7" r="4.1"/><circle cx="716.8" cy="294.0" r="4.1"/><circle cx="711.6" cy="296.2" r="4.1"/><circle cx="708.9" cy="301.6" r="4.1"/><circle cx="702.6" cy="302.8" r="4.1"/><circle cx="695.9" cy="302.8" r="4.1"/><circle cx="692.5" cy="304.9" r="4.1"/><circle cx="684.4" cy="304.1" r="4.1"/><circle cx="678.3" cy="306.4" r="4.1"/><circle cx="673.6" cy="306.2" r="4.1"/><circle cx="668.9" cy="308.1" r="4.1"/><circle cx="666.4" cy="299.2" r="4.1"/><circle cx="665.2" cy="293.6" r="4.1"/><circle cx="842.1" cy="234.0" r="4.1"/><circle cx="858.3" cy="236.0" r="4.1"/><circle cx="864.3" cy="234.0" r="4.1"/><circle cx="878.4" cy="234.0" r="4.1"/><circle cx="878.4" cy="241.1" r="4.1"/><circle cx="852.2" cy="241.1" r="4.1"/><circle cx="880.4" cy="248.1" r="4.1"/><circle cx="862.3" cy="253.2" r="4.1"/><circle cx="872.3" cy="254.2" r="4.1"/><circle cx="888.5" cy="249.1" r="4.1"/><circle cx="902.5" cy="250.1" r="4.1"/><circle cx="906.6" cy="256.2" r="4.1"/><circle cx="910.6" cy="248.1" r="4.1"/><circle cx="912.6" cy="242.1" r="4.1"/><circle cx="918.7" cy="236.0" r="4.1"/><circle cx="926.7" cy="237.0" r="4.1"/><circle cx="938.8" cy="246.1" r="4.1"/><circle cx="944.8" cy="250.1" r="4.1"/><circle cx="948.9" cy="243.1" r="4.1"/><circle cx="956.9" cy="250.1" r="4.1"/><circle cx="968.0" cy="245.7" r="4.1"/><circle cx="969.0" cy="263.2" r="4.1"/><circle cx="975.0" cy="239.1" r="4.1"/><circle cx="981.1" cy="240.1" r="4.1"/><circle cx="923.7" cy="256.2" r="4.1"/><circle cx="904.6" cy="264.2" r="4.1"/><circle cx="880.4" cy="261.2" r="4.1"/><circle cx="881.4" cy="275.3" r="4.1"/><circle cx="902.5" cy="272.3" r="4.1"/><circle cx="908.6" cy="274.3" r="4.1"/><circle cx="928.7" cy="272.3" r="4.1"/><circle cx="934.8" cy="272.3" r="4.1"/><circle cx="938.8" cy="278.3" r="4.1"/><circle cx="942.8" cy="269.3" r="4.1"/><circle cx="956.9" cy="283.4" r="4.1"/><circle cx="906.6" cy="288.4" r="4.1"/><circle cx="922.7" cy="293.4" r="4.1"/><circle cx="934.8" cy="292.4" r="4.1"/><circle cx="888.5" cy="296.4" r="4.1"/><circle cx="942.8" cy="297.4" r="4.1"/><circle cx="948.9" cy="300.5" r="4.1"/><circle cx="956.9" cy="296.4" r="4.1"/><circle cx="975.0" cy="301.5" r="4.1"/><circle cx="958.9" cy="310.5" r="4.1"/><circle cx="965.0" cy="308.5" r="4.1"/><circle cx="958.9" cy="317.6" r="4.1"/><circle cx="973.0" cy="271.3" r="4.1"/><circle cx="979.0" cy="270.3" r="4.1"/><circle cx="987.1" cy="272.3" r="4.1"/><circle cx="995.2" cy="260.2" r="4.1"/><circle cx="993.1" cy="272.3" r="4.1"/><circle cx="1001.2" cy="275.3" r="4.1"/><circle cx="993.1" cy="279.3" r="4.1"/><circle cx="1003.2" cy="288.4" r="4.1"/><circle cx="1005.2" cy="296.4" r="4.1"/><circle cx="1013.3" cy="299.5" r="4.1"/><circle cx="1025.4" cy="300.5" r="4.1"/><circle cx="1013.3" cy="309.5" r="4.1"/><circle cx="1041.5" cy="320.6" r="4.1"/><circle cx="1042.5" cy="328.7" r="4.1"/><circle cx="1047.5" cy="334.7" r="4.1"/><circle cx="1021.3" cy="335.7" r="4.1"/><circle cx="1019.3" cy="348.8" r="4.1"/><circle cx="1013.3" cy="352.8" r="4.1"/><circle cx="1003.2" cy="343.8" r="4.1"/><circle cx="991.1" cy="344.8" r="4.1"/><circle cx="975.0" cy="359.9" r="4.1"/><circle cx="950.9" cy="353.8" r="4.1"/><circle cx="947.8" cy="363.9" r="4.1"/><circle cx="945.8" cy="329.7" r="4.1"/><circle cx="933.8" cy="330.7" r="4.1"/><circle cx="926.7" cy="319.6" r="4.1"/><circle cx="910.6" cy="318.6" r="4.1"/><circle cx="899.5" cy="324.6" r="4.1"/><circle cx="880.4" cy="320.6" r="4.1"/><circle cx="859.3" cy="357.8" r="4.1"/><circle cx="877.4" cy="360.9" r="4.1"/><circle cx="894.5" cy="368.9" r="4.1"/><circle cx="901.5" cy="375.0" r="4.1"/><circle cx="924.7" cy="371.9" r="4.1"/><circle cx="878.4" cy="372.9" r="4.1"/><circle cx="1041.5" cy="350.8" r="4.1"/><circle cx="1045.5" cy="354.8" r="4.1"/><circle cx="1053.5" cy="346.8" r="4.1"/><circle cx="1055.6" cy="356.8" r="4.1"/><circle cx="1047.5" cy="362.9" r="4.1"/><circle cx="1029.4" cy="360.9" r="4.1"/><circle cx="1025.4" cy="368.9" r="4.1"/><circle cx="1037.4" cy="368.9" r="4.1"/><circle cx="1045.5" cy="375.0" r="4.1"/><circle cx="878.9" cy="331.2" r="4.1"/><circle cx="871.0" cy="336.3" r="4.1"/><circle cx="876.6" cy="344.6" r="4.1"/><circle cx="893.4" cy="339.7" r="4.1"/><circle cx="893.4" cy="338.0" r="4.1"/><circle cx="875.7" cy="335.2" r="4.1"/><circle cx="875.1" cy="334.8" r="4.1"/><circle cx="885.4" cy="348.8" r="4.1"/><circle cx="890.6" cy="340.3" r="4.1"/><circle cx="886.1" cy="346.8" r="4.1"/><circle cx="872.4" cy="344.0" r="4.1"/><circle cx="888.5" cy="340.3" r="4.1"/><circle cx="873.0" cy="332.0" r="4.1"/><circle cx="884.2" cy="330.6" r="4.1"/><circle cx="889.0" cy="331.9" r="4.1"/><circle cx="891.4" cy="331.1" r="4.1"/><circle cx="894.9" cy="338.7" r="4.1"/><circle cx="894.3" cy="345.7" r="4.1"/><circle cx="889.6" cy="347.9" r="4.1"/><circle cx="885.8" cy="350.2" r="4.1"/><circle cx="878.6" cy="349.5" r="4.1"/><circle cx="873.6" cy="344.1" r="4.1"/><circle cx="869.8" cy="341.3" r="4.1"/><circle cx="870.3" cy="336.0" r="4.1"/><circle cx="824.5" cy="250.2" r="4.1"/><circle cx="832.1" cy="240.1" r="4.1"/><circle cx="840.0" cy="250.0" r="4.1"/><circle cx="834.4" cy="250.3" r="4.1"/><circle cx="837.2" cy="241.8" r="4.1"/><circle cx="837.9" cy="230.4" r="4.1"/><circle cx="835.1" cy="234.1" r="4.1"/><circle cx="820.1" cy="247.7" r="4.1"/><circle cx="825.9" cy="240.5" r="4.1"/><circle cx="844.8" cy="242.3" r="4.1"/><circle cx="831.2" cy="241.5" r="4.1"/><circle cx="839.0" cy="247.4" r="4.1"/><circle cx="823.6" cy="242.4" r="4.1"/><circle cx="828.5" cy="236.1" r="4.1"/><circle cx="846.4" cy="241.2" r="4.1"/><circle cx="839.2" cy="246.8" r="4.1"/><circle cx="851.2" cy="239.8" r="4.1"/><circle cx="841.0" cy="241.2" r="4.1"/><circle cx="837.5" cy="245.3" r="4.1"/><circle cx="835.5" cy="241.8" r="4.1"/><circle cx="822.8" cy="232.5" r="4.1"/><circle cx="830.0" cy="230.3" r="4.1"/><circle cx="835.1" cy="231.5" r="4.1"/><circle cx="837.3" cy="230.1" r="4.1"/><circle cx="842.2" cy="232.2" r="4.1"/><circle cx="849.9" cy="239.0" r="4.1"/><circle cx="852.9" cy="240.9" r="4.1"/><circle cx="854.4" cy="246.9" r="4.1"/><circle cx="855.0" cy="249.9" r="4.1"/><circle cx="849.4" cy="252.4" r="4.1"/><circle cx="843.5" cy="252.1" r="4.1"/><circle cx="836.2" cy="250.4" r="4.1"/><circle cx="828.5" cy="250.7" r="4.1"/><circle cx="823.3" cy="250.9" r="4.1"/><circle cx="820.0" cy="249.3" r="4.1"/><circle cx="820.9" cy="246.0" r="4.1"/><circle cx="819.3" cy="240.4" r="4.1"/><circle cx="819.3" cy="234.0" r="4.1"/><circle cx="1062.4" cy="333.7" r="4.1"/><circle cx="1067.2" cy="327.9" r="4.1"/><circle cx="1047.8" cy="343.5" r="4.1"/><circle cx="1063.3" cy="346.4" r="4.1"/><circle cx="1069.2" cy="354.2" r="4.1"/><circle cx="1075.0" cy="347.4" r="4.1"/><circle cx="1022.5" cy="376.5" r="4.1"/><circle cx="1055.6" cy="374.6" r="4.1"/><circle cx="1065.3" cy="378.5" r="4.1"/><circle cx="1069.2" cy="371.7" r="4.1"/><circle cx="1076.0" cy="372.6" r="4.1"/><circle cx="988.5" cy="380.4" r="4.1"/><circle cx="986.5" cy="388.2" r="4.1"/><circle cx="988.5" cy="399.9" r="4.1"/><circle cx="1016.7" cy="387.2" r="4.1"/><circle cx="1019.6" cy="394.0" r="4.1"/><circle cx="1040.0" cy="385.3" r="4.1"/><circle cx="1050.7" cy="385.3" r="4.1"/><circle cx="1062.4" cy="399.9" r="4.1"/><circle cx="1071.1" cy="412.5" r="4.1"/><circle cx="1063.3" cy="411.5" r="4.1"/><circle cx="1078.9" cy="406.7" r="4.1"/><circle cx="1059.4" cy="424.2" r="4.1"/><circle cx="1067.2" cy="422.2" r="4.1"/><circle cx="1051.7" cy="423.2" r="4.1"/><circle cx="1041.9" cy="429.0" r="4.1"/><circle cx="1034.2" cy="417.4" r="4.1"/><circle cx="1024.4" cy="419.3" r="4.1"/><circle cx="1016.7" cy="423.2" r="4.1"/><circle cx="1001.1" cy="416.4" r="4.1"/><circle cx="995.3" cy="426.1" r="4.1"/><circle cx="979.7" cy="412.5" r="4.1"/><circle cx="965.1" cy="379.4" r="4.1"/><circle cx="966.1" cy="396.9" r="4.1"/><circle cx="903.9" cy="396.0" r="4.1"/><circle cx="910.7" cy="399.9" r="4.1"/><circle cx="912.6" cy="406.7" r="4.1"/><circle cx="921.4" cy="409.6" r="4.1"/><circle cx="934.0" cy="420.3" r="4.1"/><circle cx="944.7" cy="420.3" r="4.1"/><circle cx="945.7" cy="427.1" r="4.1"/><circle cx="919.4" cy="431.0" r="4.1"/><circle cx="968.1" cy="432.9" r="4.1"/><circle cx="979.7" cy="433.9" r="4.1"/><circle cx="1016.7" cy="433.9" r="4.1"/><circle cx="1028.3" cy="432.9" r="4.1"/><circle cx="1104.2" cy="305.6" r="4.1"/><circle cx="1102.2" cy="317.2" r="4.1"/><circle cx="1112.9" cy="325.0" r="4.1"/><circle cx="1113.9" cy="330.8" r="4.1"/><circle cx="1113.9" cy="336.7" r="4.1"/><circle cx="1111.9" cy="355.1" r="4.1"/><circle cx="952.9" cy="421.9" r="4.1"/><circle cx="967.5" cy="439.4" r="4.1"/><circle cx="1004.4" cy="437.5" r="4.1"/><circle cx="1035.6" cy="441.4" r="4.1"/><circle cx="1045.3" cy="441.4" r="4.1"/><circle cx="1052.1" cy="439.4" r="4.1"/><circle cx="1055.0" cy="433.6" r="4.1"/><circle cx="1060.8" cy="443.3" r="4.1"/><circle cx="1070.6" cy="431.7" r="4.1"/><circle cx="1074.4" cy="439.4" r="4.1"/><circle cx="1066.7" cy="455.0" r="4.1"/><circle cx="1051.1" cy="461.8" r="4.1"/><circle cx="1045.3" cy="464.7" r="4.1"/><circle cx="1037.5" cy="466.7" r="4.1"/><circle cx="1039.4" cy="472.5" r="4.1"/><circle cx="1051.1" cy="471.5" r="4.1"/><circle cx="1029.7" cy="484.2" r="4.1"/><circle cx="1020.0" cy="484.2" r="4.1"/><circle cx="1016.1" cy="478.3" r="4.1"/><circle cx="1006.4" cy="478.3" r="4.1"/><circle cx="1004.4" cy="488.1" r="4.1"/><circle cx="994.7" cy="474.4" r="4.1"/><circle cx="988.9" cy="477.4" r="4.1"/><circle cx="990.8" cy="466.7" r="4.1"/><circle cx="983.1" cy="464.7" r="4.1"/><circle cx="970.4" cy="462.8" r="4.1"/><circle cx="969.4" cy="449.2" r="4.1"/><circle cx="971.4" cy="455.0" r="4.1"/><circle cx="979.2" cy="476.4" r="4.1"/><circle cx="988.9" cy="484.2" r="4.1"/><circle cx="983.1" cy="490.0" r="4.1"/><circle cx="973.3" cy="484.2" r="4.1"/><circle cx="996.7" cy="490.0" r="4.1"/><circle cx="1006.4" cy="495.8" r="4.1"/><circle cx="1016.1" cy="490.0" r="4.1"/><circle cx="1014.2" cy="500.7" r="4.1"/><circle cx="1018.1" cy="509.4" r="4.1"/><circle cx="1027.8" cy="503.6" r="4.1"/><circle cx="1035.6" cy="501.7" r="4.1"/><circle cx="1039.4" cy="509.4" r="4.1"/><circle cx="1031.7" cy="511.4" r="4.1"/><circle cx="1047.2" cy="503.6" r="4.1"/><circle cx="1053.1" cy="505.6" r="4.1"/><circle cx="1047.2" cy="513.3" r="4.1"/><circle cx="1043.3" cy="521.1" r="4.1"/><circle cx="1037.5" cy="521.1" r="4.1"/><circle cx="1029.7" cy="521.1" r="4.1"/><circle cx="1020.0" cy="521.1" r="4.1"/><circle cx="1008.3" cy="517.2" r="4.1"/><circle cx="996.7" cy="511.4" r="4.1"/><circle cx="988.9" cy="507.5" r="4.1"/><circle cx="982.1" cy="511.4" r="4.1"/><circle cx="975.3" cy="509.4" r="4.1"/><circle cx="967.5" cy="511.4" r="4.1"/><circle cx="961.7" cy="505.6" r="4.1"/><circle cx="950.0" cy="507.5" r="4.1"/><circle cx="953.9" cy="515.3" r="4.1"/><circle cx="959.7" cy="513.3" r="4.1"/><circle cx="985.0" cy="501.7" r="4.1"/><circle cx="998.6" cy="519.2" r="4.1"/><circle cx="1006.4" cy="525.0" r="4.1"/><circle cx="988.9" cy="526.9" r="4.1"/><circle cx="983.1" cy="525.0" r="4.1"/><circle cx="971.4" cy="528.9" r="4.1"/><circle cx="961.7" cy="526.9" r="4.1"/><circle cx="953.9" cy="534.7" r="4.1"/><circle cx="949.0" cy="526.0" r="4.1"/><circle cx="969.4" cy="538.6" r="4.1"/><circle cx="975.3" cy="541.5" r="4.1"/><circle cx="986.9" cy="548.3" r="4.1"/><circle cx="999.6" cy="554.2" r="4.1"/><circle cx="1023.9" cy="558.1" r="4.1"/><circle cx="1049.2" cy="556.1" r="4.1"/><circle cx="1056.9" cy="554.2" r="4.1"/><circle cx="1082.2" cy="528.9" r="4.1"/><circle cx="1113.3" cy="453.1" r="4.1"/><circle cx="1105.5" cy="445.3" r="4.1"/><circle cx="1103.6" cy="431.7" r="4.1"/><circle cx="1076.4" cy="451.1" r="4.1"/><circle cx="1082.2" cy="456.9" r="4.1"/><circle cx="918.9" cy="493.9" r="4.1"/><circle cx="926.7" cy="499.7" r="4.1"/><circle cx="936.4" cy="505.6" r="4.1"/><circle cx="891.7" cy="488.1" r="4.1"/><circle cx="889.7" cy="456.9" r="4.1"/><circle cx="880.0" cy="443.3" r="4.1"/><circle cx="889.7" cy="437.5" r="4.1"/><circle cx="901.4" cy="439.4" r="4.1"/><circle cx="913.1" cy="435.6" r="4.1"/><circle cx="918.9" cy="437.5" r="4.1"/><circle cx="915.0" cy="449.2" r="4.1"/><circle cx="907.2" cy="458.9" r="4.1"/><circle cx="918.9" cy="462.8" r="4.1"/><circle cx="928.6" cy="464.7" r="4.1"/><circle cx="936.4" cy="466.7" r="4.1"/><circle cx="944.2" cy="462.8" r="4.1"/><circle cx="940.3" cy="456.9" r="4.1"/><circle cx="928.6" cy="451.1" r="4.1"/><circle cx="938.3" cy="447.2" r="4.1"/><circle cx="934.4" cy="435.6" r="4.1"/><circle cx="949.7" cy="496.2" r="4.1"/><circle cx="931.9" cy="476.2" r="4.1"/><circle cx="954.0" cy="487.7" r="4.1"/><circle cx="952.0" cy="499.4" r="4.1"/><circle cx="945.4" cy="485.0" r="4.1"/><circle cx="938.5" cy="478.5" r="4.1"/><circle cx="948.1" cy="481.9" r="4.1"/><circle cx="932.7" cy="479.5" r="4.1"/><circle cx="930.5" cy="480.7" r="4.1"/><circle cx="940.1" cy="483.9" r="4.1"/><circle cx="947.1" cy="480.0" r="4.1"/><circle cx="955.7" cy="491.6" r="4.1"/><circle cx="935.6" cy="489.2" r="4.1"/><circle cx="958.9" cy="487.9" r="4.1"/><circle cx="946.9" cy="500.4" r="4.1"/><circle cx="943.1" cy="490.2" r="4.1"/><circle cx="936.0" cy="474.6" r="4.1"/><circle cx="941.4" cy="477.6" r="4.1"/><circle cx="944.6" cy="477.5" r="4.1"/><circle cx="947.5" cy="481.6" r="4.1"/><circle cx="952.5" cy="482.3" r="4.1"/><circle cx="960.2" cy="487.2" r="4.1"/><circle cx="961.2" cy="488.4" r="4.1"/><circle cx="963.0" cy="496.3" r="4.1"/><circle cx="966.2" cy="503.3" r="4.1"/><circle cx="957.4" cy="505.5" r="4.1"/><circle cx="952.7" cy="503.7" r="4.1"/><circle cx="947.6" cy="502.5" r="4.1"/><circle cx="943.0" cy="498.6" r="4.1"/><circle cx="936.7" cy="496.9" r="4.1"/><circle cx="933.6" cy="492.6" r="4.1"/><circle cx="931.7" cy="488.3" r="4.1"/><circle cx="929.8" cy="483.0" r="4.1"/><circle cx="931.1" cy="476.6" r="4.1"/><circle cx="939.9" cy="457.5" r="4.1"/><circle cx="942.5" cy="457.0" r="4.1"/><circle cx="940.0" cy="462.8" r="4.1"/><circle cx="930.8" cy="453.8" r="4.1"/><circle cx="936.5" cy="463.5" r="4.1"/><circle cx="937.7" cy="465.3" r="4.1"/><circle cx="939.2" cy="459.1" r="4.1"/><circle cx="927.8" cy="440.1" r="4.1"/><circle cx="933.2" cy="440.1" r="4.1"/><circle cx="939.3" cy="439.3" r="4.1"/><circle cx="940.9" cy="443.0" r="4.1"/><circle cx="943.7" cy="449.9" r="4.1"/><circle cx="944.1" cy="453.1" r="4.1"/><circle cx="940.8" cy="458.9" r="4.1"/><circle cx="940.7" cy="463.2" r="4.1"/><circle cx="936.9" cy="467.9" r="4.1"/><circle cx="930.4" cy="466.2" r="4.1"/><circle cx="930.4" cy="460.1" r="4.1"/><circle cx="928.7" cy="455.6" r="4.1"/><circle cx="928.7" cy="449.8" r="4.1"/><circle cx="927.7" cy="445.7" r="4.1"/><circle cx="911.3" cy="470.3" r="4.1"/><circle cx="911.5" cy="454.6" r="4.1"/><circle cx="905.0" cy="461.4" r="4.1"/><circle cx="902.9" cy="447.9" r="4.1"/><circle cx="902.2" cy="453.8" r="4.1"/><circle cx="892.5" cy="465.9" r="4.1"/><circle cx="889.7" cy="463.7" r="4.1"/><circle cx="917.4" cy="463.1" r="4.1"/><circle cx="920.1" cy="470.7" r="4.1"/><circle cx="902.3" cy="455.1" r="4.1"/><circle cx="883.9" cy="448.4" r="4.1"/><circle cx="892.1" cy="445.8" r="4.1"/><circle cx="898.5" cy="445.7" r="4.1"/><circle cx="905.7" cy="446.2" r="4.1"/><circle cx="908.5" cy="450.5" r="4.1"/><circle cx="913.8" cy="452.2" r="4.1"/><circle cx="916.1" cy="455.1" r="4.1"/><circle cx="921.8" cy="463.4" r="4.1"/><circle cx="923.7" cy="465.3" r="4.1"/><circle cx="921.5" cy="471.1" r="4.1"/><circle cx="919.3" cy="476.2" r="4.1"/><circle cx="915.6" cy="479.4" r="4.1"/><circle cx="907.7" cy="481.7" r="4.1"/><circle cx="905.3" cy="481.6" r="4.1"/><circle cx="900.2" cy="478.3" r="4.1"/><circle cx="898.5" cy="472.4" r="4.1"/><circle cx="895.5" cy="469.5" r="4.1"/><circle cx="890.5" cy="463.6" r="4.1"/><circle cx="885.2" cy="458.2" r="4.1"/><circle cx="883.9" cy="455.7" r="4.1"/><circle cx="1051.6" cy="537.7" r="4.1"/><circle cx="1051.2" cy="536.6" r="4.1"/><circle cx="1046.7" cy="534.4" r="4.1"/><circle cx="1054.3" cy="536.4" r="4.1"/><circle cx="1055.7" cy="547.7" r="4.1"/><circle cx="1050.0" cy="547.2" r="4.1"/><circle cx="1046.7" cy="539.7" r="4.1"/><circle cx="1061.3" cy="538.3" r="4.1"/><circle cx="1060.0" cy="533.8" r="4.1"/><circle cx="1062.4" cy="528.0" r="4.1"/><circle cx="1066.0" cy="529.9" r="4.1"/><circle cx="1067.5" cy="539.7" r="4.1"/><circle cx="1058.5" cy="533.0" r="4.1"/><circle cx="681.8" cy="407.8" r="4.1"/><circle cx="690.6" cy="409.7" r="4.1"/><circle cx="698.3" cy="410.7" r="4.1"/><circle cx="682.8" cy="415.6" r="4.1"/><circle cx="694.4" cy="419.4" r="4.1"/><circle cx="702.2" cy="421.4" r="4.1"/><circle cx="718.7" cy="412.6" r="4.1"/><circle cx="711.9" cy="427.2" r="4.1"/><circle cx="724.6" cy="423.3" r="4.1"/><circle cx="733.3" cy="427.2" r="4.1"/><circle cx="741.1" cy="411.7" r="4.1"/><circle cx="740.1" cy="419.4" r="4.1"/><circle cx="741.1" cy="427.2" r="4.1"/><circle cx="746.9" cy="425.3" r="4.1"/><circle cx="756.7" cy="432.1" r="4.1"/><circle cx="761.5" cy="429.2" r="4.1"/><circle cx="768.3" cy="438.9" r="4.1"/><circle cx="788.7" cy="435.0" r="4.1"/><circle cx="778.1" cy="449.6" r="4.1"/><circle cx="787.8" cy="447.6" r="4.1"/><circle cx="799.4" cy="447.6" r="4.1"/><circle cx="807.2" cy="439.9" r="4.1"/><circle cx="811.1" cy="445.7" r="4.1"/><circle cx="822.8" cy="439.9" r="4.1"/><circle cx="830.6" cy="438.9" r="4.1"/><circle cx="844.2" cy="438.9" r="4.1"/><circle cx="850.0" cy="443.7" r="4.1"/><circle cx="855.8" cy="435.0" r="4.1"/><circle cx="863.6" cy="436.0" r="4.1"/><circle cx="869.4" cy="427.2" r="4.1"/><circle cx="886.9" cy="405.8" r="4.1"/><circle cx="890.8" cy="448.6" r="4.1"/><circle cx="894.7" cy="454.4" r="4.1"/><circle cx="900.5" cy="450.6" r="4.1"/><circle cx="908.3" cy="452.5" r="4.1"/><circle cx="900.5" cy="458.3" r="4.1"/><circle cx="912.2" cy="471.9" r="4.1"/><circle cx="916.1" cy="477.8" r="4.1"/><circle cx="902.5" cy="481.7" r="4.1"/><circle cx="852.9" cy="459.3" r="4.1"/><circle cx="840.3" cy="464.2" r="4.1"/><circle cx="823.7" cy="460.3" r="4.1"/><circle cx="815.0" cy="463.2" r="4.1"/><circle cx="789.7" cy="473.9" r="4.1"/><circle cx="784.9" cy="459.3" r="4.1"/><circle cx="772.2" cy="467.1" r="4.1"/><circle cx="764.4" cy="465.1" r="4.1"/><circle cx="768.3" cy="473.9" r="4.1"/><circle cx="762.5" cy="473.9" r="4.1"/><circle cx="756.7" cy="470.0" r="4.1"/><circle cx="748.9" cy="472.9" r="4.1"/><circle cx="745.0" cy="467.1" r="4.1"/><circle cx="737.2" cy="462.2" r="4.1"/><circle cx="731.4" cy="466.1" r="4.1"/><circle cx="723.6" cy="464.2" r="4.1"/><circle cx="722.6" cy="483.6" r="4.1"/><circle cx="739.2" cy="480.7" r="4.1"/><circle cx="711.9" cy="489.4" r="4.1"/><circle cx="706.1" cy="494.3" r="4.1"/><circle cx="696.4" cy="493.3" r="4.1"/><circle cx="704.2" cy="484.6" r="4.1"/><circle cx="713.9" cy="477.8" r="4.1"/><circle cx="698.3" cy="477.8" r="4.1"/><circle cx="688.6" cy="473.9" r="4.1"/><circle cx="678.9" cy="477.8" r="4.1"/><circle cx="682.8" cy="466.1" r="4.1"/><circle cx="694.4" cy="462.2" r="4.1"/><circle cx="702.2" cy="456.4" r="4.1"/><circle cx="708.1" cy="450.6" r="4.1"/><circle cx="717.8" cy="452.5" r="4.1"/><circle cx="725.6" cy="446.7" r="4.1"/><circle cx="733.3" cy="444.7" r="4.1"/><circle cx="741.1" cy="444.7" r="4.1"/><circle cx="745.0" cy="438.9" r="4.1"/><circle cx="752.8" cy="442.8" r="4.1"/><circle cx="762.5" cy="446.7" r="4.1"/><circle cx="737.2" cy="456.4" r="4.1"/><circle cx="721.7" cy="436.9" r="4.1"/><circle cx="706.1" cy="435.0" r="4.1"/><circle cx="698.3" cy="436.9" r="4.1"/><circle cx="690.6" cy="440.8" r="4.1"/><circle cx="688.6" cy="448.6" r="4.1"/><circle cx="678.9" cy="454.4" r="4.1"/><circle cx="663.3" cy="464.2" r="4.1"/><circle cx="669.2" cy="458.3" r="4.1"/><circle cx="673.1" cy="438.9" r="4.1"/><circle cx="665.3" cy="419.4" r="4.1"/><circle cx="659.4" cy="411.7" r="4.1"/><circle cx="657.5" cy="400.0" r="4.1"/><circle cx="665.3" cy="425.3" r="4.1"/><circle cx="717.8" cy="423.3" r="4.1"/><circle cx="729.4" cy="419.4" r="4.1"/><circle cx="725.6" cy="400.0" r="4.1"/><circle cx="737.2" cy="400.0" r="4.1"/><circle cx="693.1" cy="485.3" r="4.1"/><circle cx="679.3" cy="455.9" r="4.1"/><circle cx="666.2" cy="410.4" r="4.1"/><circle cx="691.5" cy="489.7" r="4.1"/><circle cx="669.4" cy="412.2" r="4.1"/><circle cx="666.4" cy="460.6" r="4.1"/><circle cx="664.7" cy="457.3" r="4.1"/><circle cx="689.3" cy="484.2" r="4.1"/><circle cx="666.7" cy="463.6" r="4.1"/><circle cx="676.2" cy="465.0" r="4.1"/><circle cx="669.8" cy="478.1" r="4.1"/><circle cx="665.1" cy="421.1" r="4.1"/><circle cx="662.6" cy="421.3" r="4.1"/><circle cx="676.0" cy="463.4" r="4.1"/><circle cx="674.6" cy="420.3" r="4.1"/><circle cx="654.7" cy="405.7" r="4.1"/><circle cx="670.9" cy="417.7" r="4.1"/><circle cx="673.8" cy="435.6" r="4.1"/><circle cx="671.0" cy="416.1" r="4.1"/><circle cx="699.6" cy="478.3" r="4.1"/><circle cx="679.3" cy="435.5" r="4.1"/><circle cx="654.0" cy="403.3" r="4.1"/><circle cx="666.7" cy="471.2" r="4.1"/><circle cx="667.7" cy="400.4" r="4.1"/><circle cx="695.7" cy="487.3" r="4.1"/><circle cx="688.6" cy="489.9" r="4.1"/><circle cx="694.7" cy="478.4" r="4.1"/><circle cx="670.8" cy="430.4" r="4.1"/><circle cx="672.8" cy="474.5" r="4.1"/><circle cx="655.4" cy="403.2" r="4.1"/><circle cx="708.8" cy="484.2" r="4.1"/><circle cx="656.6" cy="409.2" r="4.1"/><circle cx="680.7" cy="467.6" r="4.1"/><circle cx="676.0" cy="459.1" r="4.1"/><circle cx="668.8" cy="454.0" r="4.1"/><circle cx="673.4" cy="470.3" r="4.1"/><circle cx="663.3" cy="423.6" r="4.1"/><circle cx="651.3" cy="401.2" r="4.1"/><circle cx="658.7" cy="399.7" r="4.1"/><circle cx="666.2" cy="399.2" r="4.1"/><circle cx="670.1" cy="403.6" r="4.1"/><circle cx="670.5" cy="406.4" r="4.1"/><circle cx="673.5" cy="411.2" r="4.1"/><circle cx="672.3" cy="415.6" r="4.1"/><circle cx="677.6" cy="427.0" r="4.1"/><circle cx="680.2" cy="430.0" r="4.1"/><circle cx="681.2" cy="436.4" r="4.1"/><circle cx="681.8" cy="440.2" r="4.1"/><circle cx="682.3" cy="444.3" r="4.1"/><circle cx="681.3" cy="451.4" r="4.1"/><circle cx="680.4" cy="456.8" r="4.1"/><circle cx="682.0" cy="462.2" r="4.1"/><circle cx="684.4" cy="469.9" r="4.1"/><circle cx="688.6" cy="473.2" r="4.1"/><circle cx="694.6" cy="476.6" r="4.1"/><circle cx="697.5" cy="478.5" r="4.1"/><circle cx="703.5" cy="479.5" r="4.1"/><circle cx="708.4" cy="484.6" r="4.1"/><circle cx="708.9" cy="489.1" r="4.1"/><circle cx="702.8" cy="490.5" r="4.1"/><circle cx="698.4" cy="492.1" r="4.1"/><circle cx="693.5" cy="494.9" r="4.1"/><circle cx="690.5" cy="491.6" r="4.1"/><circle cx="682.9" cy="489.4" r="4.1"/><circle cx="680.0" cy="484.8" r="4.1"/><circle cx="673.8" cy="483.5" r="4.1"/><circle cx="670.2" cy="481.2" r="4.1"/><circle cx="665.1" cy="471.2" r="4.1"/><circle cx="665.9" cy="464.8" r="4.1"/><circle cx="664.7" cy="463.3" r="4.1"/><circle cx="663.6" cy="456.3" r="4.1"/><circle cx="667.4" cy="449.8" r="4.1"/><circle cx="665.9" cy="443.4" r="4.1"/><circle cx="666.2" cy="440.0" r="4.1"/><circle cx="664.7" cy="431.4" r="4.1"/><circle cx="664.7" cy="427.5" r="4.1"/><circle cx="661.4" cy="422.6" r="4.1"/><circle cx="656.9" cy="413.4" r="4.1"/><circle cx="654.5" cy="409.4" r="4.1"/><circle cx="654.4" cy="405.0" r="4.1"/><circle cx="707.9" cy="387.4" r="4.1"/><circle cx="715.9" cy="392.8" r="4.1"/><circle cx="702.5" cy="395.4" r="4.1"/><circle cx="694.4" cy="398.1" r="4.1"/><circle cx="686.4" cy="398.1" r="4.1"/><circle cx="687.7" cy="435.7" r="4.1"/><circle cx="710.5" cy="465.2" r="4.1"/><circle cx="697.1" cy="470.6" r="4.1"/><circle cx="710.5" cy="473.3" r="4.1"/><circle cx="670.8" cy="414.5" r="4.1"/><circle cx="674.8" cy="308.6" r="4.1"/><circle cx="646.1" cy="370.7" r="4.1"/><circle cx="643.0" cy="372.9" r="4.1"/><circle cx="677.8" cy="295.9" r="4.1"/><circle cx="688.3" cy="303.8" r="4.1"/><circle cx="677.9" cy="298.5" r="4.1"/><circle cx="676.3" cy="471.7" r="4.1"/><circle cx="640.8" cy="355.4" r="4.1"/><circle cx="677.2" cy="464.6" r="4.1"/><circle cx="652.7" cy="338.5" r="4.1"/><circle cx="683.6" cy="457.5" r="4.1"/><circle cx="665.3" cy="434.8" r="4.1"/><circle cx="697.3" cy="297.3" r="4.1"/><circle cx="678.0" cy="459.9" r="4.1"/><circle cx="646.4" cy="331.7" r="4.1"/><circle cx="689.7" cy="292.3" r="4.1"/><circle cx="644.2" cy="356.6" r="4.1"/><circle cx="654.0" cy="400.1" r="4.1"/><circle cx="655.6" cy="316.7" r="4.1"/><circle cx="652.0" cy="404.8" r="4.1"/><circle cx="663.3" cy="431.9" r="4.1"/><circle cx="657.4" cy="411.3" r="4.1"/><circle cx="708.6" cy="291.0" r="4.1"/><circle cx="657.0" cy="333.4" r="4.1"/><circle cx="674.4" cy="449.2" r="4.1"/><circle cx="671.8" cy="427.1" r="4.1"/><circle cx="653.0" cy="407.6" r="4.1"/><circle cx="664.1" cy="315.3" r="4.1"/><circle cx="665.6" cy="445.0" r="4.1"/><circle cx="658.9" cy="425.4" r="4.1"/><circle cx="671.7" cy="436.4" r="4.1"/><circle cx="664.2" cy="423.3" r="4.1"/><circle cx="676.3" cy="441.0" r="4.1"/><circle cx="650.7" cy="383.0" r="4.1"/><circle cx="664.3" cy="447.7" r="4.1"/><circle cx="659.0" cy="329.3" r="4.1"/><circle cx="709.3" cy="292.9" r="4.1"/><circle cx="652.5" cy="338.6" r="4.1"/><circle cx="666.9" cy="457.7" r="4.1"/><circle cx="654.8" cy="376.5" r="4.1"/><circle cx="649.5" cy="372.3" r="4.1"/><circle cx="645.9" cy="376.7" r="4.1"/><circle cx="651.3" cy="345.9" r="4.1"/><circle cx="648.2" cy="318.0" r="4.1"/><circle cx="656.0" cy="350.7" r="4.1"/><circle cx="662.7" cy="324.4" r="4.1"/><circle cx="643.8" cy="361.8" r="4.1"/><circle cx="651.7" cy="410.5" r="4.1"/><circle cx="668.6" cy="439.9" r="4.1"/><circle cx="669.0" cy="430.3" r="4.1"/><circle cx="661.4" cy="408.6" r="4.1"/><circle cx="643.5" cy="368.6" r="4.1"/><circle cx="676.1" cy="475.1" r="4.1"/><circle cx="646.3" cy="316.5" r="4.1"/><circle cx="654.9" cy="315.2" r="4.1"/><circle cx="657.3" cy="314.0" r="4.1"/><circle cx="663.2" cy="310.7" r="4.1"/><circle cx="666.1" cy="304.4" r="4.1"/><circle cx="668.0" cy="299.5" r="4.1"/><circle cx="672.4" cy="294.4" r="4.1"/><circle cx="679.8" cy="290.8" r="4.1"/><circle cx="684.1" cy="289.2" r="4.1"/><circle cx="689.5" cy="290.9" r="4.1"/><circle cx="693.8" cy="289.1" r="4.1"/><circle cx="701.8" cy="289.5" r="4.1"/><circle cx="705.1" cy="288.8" r="4.1"/><circle cx="708.0" cy="289.6" r="4.1"/><circle cx="716.0" cy="288.2" r="4.1"/><circle cx="716.4" cy="290.2" r="4.1"/><circle cx="713.1" cy="292.2" r="4.1"/><circle cx="706.5" cy="293.9" r="4.1"/><circle cx="701.1" cy="297.8" r="4.1"/><circle cx="698.8" cy="298.6" r="4.1"/><circle cx="692.0" cy="301.8" r="4.1"/><circle cx="686.7" cy="305.1" r="4.1"/><circle cx="682.4" cy="306.8" r="4.1"/><circle cx="678.8" cy="311.9" r="4.1"/><circle cx="674.5" cy="316.9" r="4.1"/><circle cx="669.5" cy="320.7" r="4.1"/><circle cx="667.8" cy="322.5" r="4.1"/><circle cx="664.6" cy="326.2" r="4.1"/><circle cx="664.6" cy="331.0" r="4.1"/><circle cx="660.3" cy="334.8" r="4.1"/><circle cx="660.7" cy="340.2" r="4.1"/><circle cx="659.5" cy="346.2" r="4.1"/><circle cx="657.9" cy="350.6" r="4.1"/><circle cx="656.1" cy="359.7" r="4.1"/><circle cx="655.7" cy="363.9" r="4.1"/><circle cx="655.0" cy="370.9" r="4.1"/><circle cx="657.8" cy="374.5" r="4.1"/><circle cx="657.7" cy="377.5" r="4.1"/><circle cx="659.4" cy="383.7" r="4.1"/><circle cx="662.3" cy="387.7" r="4.1"/><circle cx="665.9" cy="391.9" r="4.1"/><circle cx="667.0" cy="398.9" r="4.1"/><circle cx="669.9" cy="402.7" r="4.1"/><circle cx="671.9" cy="406.2" r="4.1"/><circle cx="672.4" cy="412.7" r="4.1"/><circle cx="673.9" cy="421.4" r="4.1"/><circle cx="676.0" cy="425.3" r="4.1"/><circle cx="677.3" cy="430.2" r="4.1"/><circle cx="678.7" cy="437.1" r="4.1"/><circle cx="680.1" cy="443.3" r="4.1"/><circle cx="683.0" cy="447.0" r="4.1"/><circle cx="683.5" cy="453.2" r="4.1"/><circle cx="683.1" cy="460.8" r="4.1"/><circle cx="683.7" cy="463.5" r="4.1"/><circle cx="685.1" cy="470.6" r="4.1"/><circle cx="683.2" cy="476.0" r="4.1"/><circle cx="683.1" cy="480.4" r="4.1"/><circle cx="674.8" cy="480.7" r="4.1"/><circle cx="670.7" cy="478.6" r="4.1"/><circle cx="665.9" cy="478.2" r="4.1"/><circle cx="665.9" cy="472.1" r="4.1"/><circle cx="665.6" cy="466.7" r="4.1"/><circle cx="663.5" cy="461.7" r="4.1"/><circle cx="662.4" cy="454.7" r="4.1"/><circle cx="660.7" cy="450.8" r="4.1"/><circle cx="659.1" cy="444.8" r="4.1"/><circle cx="659.8" cy="439.5" r="4.1"/><circle cx="658.7" cy="435.6" r="4.1"/><circle cx="655.7" cy="428.2" r="4.1"/><circle cx="654.4" cy="423.6" r="4.1"/><circle cx="654.6" cy="416.5" r="4.1"/><circle cx="650.4" cy="411.6" r="4.1"/><circle cx="650.3" cy="407.9" r="4.1"/><circle cx="647.4" cy="402.0" r="4.1"/><circle cx="648.5" cy="398.0" r="4.1"/><circle cx="645.5" cy="390.3" r="4.1"/><circle cx="643.2" cy="384.6" r="4.1"/><circle cx="641.5" cy="382.5" r="4.1"/><circle cx="642.8" cy="375.1" r="4.1"/><circle cx="638.2" cy="367.5" r="4.1"/><circle cx="637.1" cy="364.7" r="4.1"/><circle cx="635.4" cy="360.9" r="4.1"/><circle cx="637.2" cy="353.9" r="4.1"/><circle cx="637.9" cy="350.2" r="4.1"/><circle cx="641.2" cy="342.5" r="4.1"/><circle cx="643.0" cy="335.0" r="4.1"/><circle cx="643.9" cy="334.6" r="4.1"/><circle cx="643.8" cy="328.8" r="4.1"/><circle cx="646.4" cy="322.5" r="4.1"/><circle cx="749.7" cy="181.2" r="4.1"/><circle cx="763.0" cy="183.6" r="4.1"/><circle cx="769.0" cy="180.0" r="4.1"/><circle cx="761.8" cy="199.3" r="4.1"/><circle cx="767.8" cy="204.8" r="4.1"/><circle cx="766.6" cy="213.2" r="4.1"/><circle cx="773.2" cy="215.6" r="4.1"/><circle cx="801.0" cy="206.0" r="4.1"/><circle cx="811.9" cy="203.6" r="4.1"/><circle cx="839.1" cy="189.7" r="4.1"/><circle cx="848.8" cy="191.5" r="4.1"/><circle cx="865.7" cy="187.3" r="4.1"/><circle cx="875.3" cy="188.5" r="4.1"/><circle cx="885.0" cy="200.5" r="4.1"/><circle cx="892.3" cy="203.0" r="4.1"/><circle cx="877.8" cy="219.9" r="4.1"/><circle cx="860.8" cy="223.5" r="4.1"/><circle cx="842.7" cy="223.5" r="4.1"/><circle cx="836.7" cy="222.3" r="4.1"/><circle cx="869.3" cy="229.5" r="4.1"/><circle cx="881.4" cy="253.7" r="4.1"/><circle cx="818.5" cy="269.4" r="4.1"/><circle cx="752.1" cy="269.4" r="4.1"/><circle cx="795.6" cy="235.6" r="4.1"/><circle cx="802.8" cy="245.3" r="4.1"/><circle cx="806.5" cy="232.0" r="4.1"/><circle cx="818.5" cy="236.8" r="4.1"/><circle cx="824.6" cy="240.4" r="4.1"/><circle cx="833.1" cy="247.7" r="4.1"/><circle cx="747.3" cy="230.8" r="4.1"/><circle cx="752.1" cy="225.9" r="4.1"/><circle cx="760.5" cy="228.3" r="4.1"/><circle cx="865.4" cy="205.6" r="4.1"/><circle cx="873.5" cy="206.8" r="4.1"/><circle cx="875.1" cy="201.8" r="4.1"/><circle cx="877.0" cy="205.5" r="4.1"/><circle cx="874.6" cy="210.0" r="4.1"/><circle cx="871.0" cy="205.9" r="4.1"/><circle cx="868.7" cy="201.2" r="4.1"/><circle cx="873.2" cy="198.5" r="4.1"/><circle cx="880.2" cy="204.4" r="4.1"/><circle cx="879.7" cy="210.2" r="4.1"/><circle cx="872.6" cy="214.3" r="4.1"/><circle cx="868.5" cy="214.6" r="4.1"/><circle cx="864.8" cy="208.1" r="4.1"/><circle cx="853.2" cy="202.8" r="4.1"/><circle cx="847.6" cy="206.4" r="4.1"/><circle cx="849.8" cy="202.6" r="4.1"/><circle cx="845.0" cy="201.8" r="4.1"/><circle cx="849.9" cy="198.7" r="4.1"/><circle cx="855.2" cy="200.4" r="4.1"/><circle cx="854.6" cy="207.6" r="4.1"/><circle cx="847.5" cy="210.6" r="4.1"/><circle cx="841.9" cy="209.0" r="4.1"/><circle cx="803.1" cy="228.9" r="4.1"/><circle cx="787.8" cy="234.7" r="4.1"/><circle cx="802.7" cy="225.0" r="4.1"/><circle cx="798.5" cy="236.3" r="4.1"/><circle cx="805.2" cy="229.9" r="4.1"/><circle cx="796.3" cy="231.1" r="4.1"/><circle cx="789.9" cy="232.9" r="4.1"/><circle cx="787.1" cy="227.8" r="4.1"/><circle cx="791.7" cy="225.5" r="4.1"/><circle cx="799.4" cy="222.3" r="4.1"/><circle cx="805.2" cy="222.4" r="4.1"/><circle cx="806.1" cy="229.7" r="4.1"/><circle cx="802.6" cy="234.1" r="4.1"/><circle cx="797.8" cy="237.3" r="4.1"/><circle cx="794.4" cy="237.3" r="4.1"/><circle cx="788.0" cy="234.4" r="4.1"/><circle cx="687.3" cy="220.0" r="4.1"/><circle cx="780.3" cy="235.7" r="4.1"/><circle cx="785.1" cy="227.3" r="4.1"/><circle cx="791.2" cy="227.3" r="4.1"/><circle cx="796.0" cy="255.0" r="4.1"/><circle cx="769.4" cy="261.1" r="4.1"/><circle cx="681.8" cy="296.9" r="4.1"/><circle cx="711.6" cy="294.0" r="4.1"/><circle cx="682.3" cy="298.1" r="4.1"/><circle cx="694.4" cy="284.0" r="4.1"/><circle cx="714.8" cy="288.0" r="4.1"/><circle cx="700.5" cy="299.4" r="4.1"/><circle cx="694.3" cy="293.7" r="4.1"/><circle cx="685.8" cy="309.0" r="4.1"/><circle cx="692.8" cy="307.2" r="4.1"/><circle cx="681.7" cy="303.7" r="4.1"/><circle cx="705.7" cy="299.6" r="4.1"/><circle cx="685.2" cy="302.8" r="4.1"/><circle cx="690.8" cy="297.9" r="4.1"/><circle cx="707.5" cy="283.5" r="4.1"/><circle cx="691.7" cy="288.0" r="4.1"/><circle cx="684.5" cy="294.7" r="4.1"/><circle cx="685.2" cy="300.5" r="4.1"/><circle cx="680.5" cy="301.7" r="4.1"/><circle cx="713.6" cy="287.0" r="4.1"/><circle cx="712.2" cy="284.6" r="4.1"/><circle cx="696.2" cy="283.3" r="4.1"/><circle cx="702.8" cy="293.8" r="4.1"/><circle cx="692.3" cy="304.8" r="4.1"/><circle cx="681.5" cy="292.9" r="4.1"/><circle cx="684.0" cy="291.1" r="4.1"/><circle cx="689.9" cy="286.9" r="4.1"/><circle cx="695.0" cy="281.7" r="4.1"/><circle cx="702.4" cy="281.4" r="4.1"/><circle cx="707.1" cy="280.6" r="4.1"/><circle cx="712.3" cy="284.6" r="4.1"/><circle cx="715.7" cy="287.1" r="4.1"/><circle cx="715.8" cy="292.2" r="4.1"/><circle cx="710.8" cy="295.7" r="4.1"/><circle cx="707.7" cy="301.8" r="4.1"/><circle cx="703.2" cy="303.6" r="4.1"/><circle cx="698.6" cy="305.6" r="4.1"/><circle cx="687.7" cy="311.0" r="4.1"/><circle cx="683.9" cy="308.5" r="4.1"/><circle cx="680.1" cy="307.0" r="4.1"/><circle cx="681.2" cy="303.1" r="4.1"/><circle cx="678.9" cy="297.6" r="4.1"/><circle cx="933.2" cy="184.4" r="4.1"/><circle cx="948.9" cy="187.9" r="4.1"/><circle cx="959.3" cy="186.2" r="4.1"/><circle cx="962.8" cy="199.3" r="4.1"/><circle cx="968.1" cy="202.8" r="4.1"/><circle cx="973.3" cy="214.1" r="4.1"/><circle cx="982.0" cy="228.1" r="4.1"/><circle cx="990.8" cy="231.6" r="4.1"/><circle cx="996.0" cy="212.4" r="4.1"/><circle cx="1001.2" cy="219.3" r="4.1"/><circle cx="1007.3" cy="222.8" r="4.1"/><circle cx="1018.7" cy="176.6" r="4.1"/><circle cx="1030.0" cy="220.2" r="4.1"/><circle cx="1036.1" cy="239.4" r="4.1"/><circle cx="1023.1" cy="245.5" r="4.1"/><circle cx="914.0" cy="201.9" r="4.1"/><circle cx="912.2" cy="212.4" r="4.1"/><circle cx="917.5" cy="214.1" r="4.1"/><circle cx="915.7" cy="221.1" r="4.1"/><circle cx="917.5" cy="229.8" r="4.1"/><circle cx="995.8" cy="188.6" r="4.1"/><circle cx="987.1" cy="173.7" r="4.1"/><circle cx="978.0" cy="185.2" r="4.1"/><circle cx="993.8" cy="192.0" r="4.1"/><circle cx="989.9" cy="171.2" r="4.1"/><circle cx="998.7" cy="181.1" r="4.1"/><circle cx="979.9" cy="170.7" r="4.1"/><circle cx="997.7" cy="176.9" r="4.1"/><circle cx="976.7" cy="177.0" r="4.1"/><circle cx="987.9" cy="179.5" r="4.1"/><circle cx="987.8" cy="168.5" r="4.1"/><circle cx="994.0" cy="192.2" r="4.1"/><circle cx="998.8" cy="175.3" r="4.1"/><circle cx="993.9" cy="177.3" r="4.1"/><circle cx="995.2" cy="166.4" r="4.1"/><circle cx="999.0" cy="196.8" r="4.1"/><circle cx="987.1" cy="181.8" r="4.1"/><circle cx="974.7" cy="168.7" r="4.1"/><circle cx="979.7" cy="167.7" r="4.1"/><circle cx="982.6" cy="168.9" r="4.1"/><circle cx="986.8" cy="167.4" r="4.1"/><circle cx="991.9" cy="165.8" r="4.1"/><circle cx="999.3" cy="166.7" r="4.1"/><circle cx="1004.0" cy="171.4" r="4.1"/><circle cx="1001.0" cy="176.7" r="4.1"/><circle cx="1000.8" cy="183.1" r="4.1"/><circle cx="1001.2" cy="190.3" r="4.1"/><circle cx="999.7" cy="196.6" r="4.1"/><circle cx="994.8" cy="198.4" r="4.1"/><circle cx="989.7" cy="194.3" r="4.1"/><circle cx="985.9" cy="189.2" r="4.1"/><circle cx="980.5" cy="184.8" r="4.1"/><circle cx="974.1" cy="184.9" r="4.1"/><circle cx="973.3" cy="175.3" r="4.1"/><circle cx="1044.3" cy="251.1" r="4.1"/><circle cx="1058.9" cy="256.0" r="4.1"/><circle cx="1072.5" cy="254.0" r="4.1"/><circle cx="1066.7" cy="263.7" r="4.1"/><circle cx="1051.1" cy="280.3" r="4.1"/><circle cx="1068.6" cy="282.2" r="4.1"/><circle cx="1096.8" cy="282.8" r="4.1"/><circle cx="1059.9" cy="290.0" r="4.1"/><circle cx="1049.6" cy="176.8" r="4.1"/><circle cx="1074.4" cy="177.2" r="4.1"/><circle cx="1100.7" cy="176.8" r="4.1"/><circle cx="1100.7" cy="184.0" r="4.1"/><circle cx="1108.5" cy="192.8" r="4.1"/><circle cx="996.7" cy="184.7" r="4.1"/><circle cx="973.1" cy="175.8" r="4.1"/><circle cx="979.1" cy="173.2" r="4.1"/><circle cx="991.1" cy="171.6" r="4.1"/><circle cx="984.9" cy="175.4" r="4.1"/><circle cx="1000.5" cy="178.9" r="4.1"/><circle cx="996.6" cy="185.7" r="4.1"/><circle cx="991.3" cy="168.9" r="4.1"/><circle cx="992.5" cy="169.1" r="4.1"/><circle cx="988.3" cy="186.8" r="4.1"/><circle cx="990.7" cy="168.5" r="4.1"/><circle cx="987.6" cy="173.5" r="4.1"/><circle cx="1001.0" cy="169.5" r="4.1"/><circle cx="980.9" cy="179.3" r="4.1"/><circle cx="975.1" cy="177.8" r="4.1"/><circle cx="1001.1" cy="175.7" r="4.1"/><circle cx="979.7" cy="174.4" r="4.1"/><circle cx="988.0" cy="165.7" r="4.1"/><circle cx="980.5" cy="172.7" r="4.1"/><circle cx="980.4" cy="168.3" r="4.1"/><circle cx="974.1" cy="176.5" r="4.1"/><circle cx="973.8" cy="171.9" r="4.1"/><circle cx="976.9" cy="168.8" r="4.1"/><circle cx="982.4" cy="165.6" r="4.1"/><circle cx="986.9" cy="163.2" r="4.1"/><circle cx="992.1" cy="162.5" r="4.1"/><circle cx="996.9" cy="163.5" r="4.1"/><circle cx="1001.4" cy="171.8" r="4.1"/><circle cx="1001.0" cy="177.4" r="4.1"/><circle cx="1001.9" cy="179.6" r="4.1"/><circle cx="1001.5" cy="184.9" r="4.1"/><circle cx="994.2" cy="186.8" r="4.1"/><circle cx="985.6" cy="188.1" r="4.1"/><circle cx="981.0" cy="187.9" r="4.1"/><circle cx="975.8" cy="188.4" r="4.1"/><circle cx="972.4" cy="181.0" r="4.1"/><circle cx="998.3" cy="563.7" r="4.1"/><circle cx="993.1" cy="566.3" r="4.1"/><circle cx="1052.4" cy="562.0" r="4.1"/><circle cx="1080.4" cy="571.6" r="4.1"/><circle cx="1096.1" cy="570.7" r="4.1"/><circle cx="1103.9" cy="568.9" r="4.1"/><circle cx="1059.4" cy="588.1" r="4.1"/><circle cx="1065.5" cy="596.0" r="4.1"/><circle cx="1058.5" cy="597.7" r="4.1"/><circle cx="1049.8" cy="612.6" r="4.1"/><circle cx="1040.2" cy="619.6" r="4.1"/><circle cx="1046.3" cy="620.4" r="4.1"/><circle cx="1027.1" cy="620.4" r="4.1"/><circle cx="1021.0" cy="613.5" r="4.1"/><circle cx="1000.9" cy="588.1" r="4.1"/><circle cx="989.6" cy="610.0" r="4.1"/><circle cx="1074.3" cy="618.7" r="4.1"/><circle cx="1030.9" cy="602.4" r="4.1"/><circle cx="1045.5" cy="603.5" r="4.1"/><circle cx="1028.1" cy="604.7" r="4.1"/><circle cx="1043.2" cy="611.0" r="4.1"/><circle cx="1035.3" cy="590.7" r="4.1"/><circle cx="1024.4" cy="604.6" r="4.1"/><circle cx="1053.8" cy="596.0" r="4.1"/><circle cx="1022.0" cy="588.4" r="4.1"/><circle cx="1027.0" cy="601.7" r="4.1"/><circle cx="1016.4" cy="585.4" r="4.1"/><circle cx="1033.3" cy="585.1" r="4.1"/><circle cx="1018.3" cy="604.8" r="4.1"/><circle cx="1052.3" cy="590.7" r="4.1"/><circle cx="1026.1" cy="575.3" r="4.1"/><circle cx="1017.1" cy="573.4" r="4.1"/><circle cx="1034.6" cy="594.8" r="4.1"/><circle cx="1018.4" cy="607.5" r="4.1"/><circle cx="1010.7" cy="587.2" r="4.1"/><circle cx="1029.6" cy="611.3" r="4.1"/><circle cx="1047.4" cy="592.6" r="4.1"/><circle cx="1030.9" cy="599.8" r="4.1"/><circle cx="1022.6" cy="583.8" r="4.1"/><circle cx="1035.9" cy="583.5" r="4.1"/><circle cx="1031.4" cy="571.2" r="4.1"/><circle cx="1021.6" cy="585.9" r="4.1"/><circle cx="1033.7" cy="594.4" r="4.1"/><circle cx="1028.9" cy="587.8" r="4.1"/><circle cx="1037.8" cy="615.0" r="4.1"/><circle cx="1019.6" cy="592.2" r="4.1"/><circle cx="1050.1" cy="574.7" r="4.1"/><circle cx="1050.8" cy="591.4" r="4.1"/><circle cx="1042.0" cy="606.4" r="4.1"/><circle cx="1024.6" cy="574.0" r="4.1"/><circle cx="1016.2" cy="591.3" r="4.1"/><circle cx="1030.1" cy="575.5" r="4.1"/><circle cx="1036.4" cy="583.6" r="4.1"/><circle cx="1048.3" cy="581.3" r="4.1"/><circle cx="1017.1" cy="607.5" r="4.1"/><circle cx="1035.3" cy="599.0" r="4.1"/><circle cx="1010.2" cy="590.7" r="4.1"/><circle cx="1033.2" cy="579.3" r="4.1"/><circle cx="1039.2" cy="592.3" r="4.1"/><circle cx="1024.0" cy="572.3" r="4.1"/><circle cx="1004.3" cy="571.2" r="4.1"/><circle cx="1008.5" cy="591.9" r="4.1"/><circle cx="1050.6" cy="596.3" r="4.1"/><circle cx="1049.5" cy="569.4" r="4.1"/><circle cx="1018.3" cy="601.3" r="4.1"/><circle cx="1020.3" cy="574.6" r="4.1"/><circle cx="1014.7" cy="571.2" r="4.1"/><circle cx="1055.8" cy="594.8" r="4.1"/><circle cx="1020.0" cy="588.3" r="4.1"/><circle cx="1022.4" cy="569.0" r="4.1"/><circle cx="1055.0" cy="594.8" r="4.1"/><circle cx="1037.5" cy="578.5" r="4.1"/><circle cx="1052.7" cy="581.7" r="4.1"/><circle cx="1017.1" cy="595.8" r="4.1"/><circle cx="1058.8" cy="578.2" r="4.1"/><circle cx="1022.6" cy="601.4" r="4.1"/><circle cx="1011.8" cy="581.4" r="4.1"/><circle cx="1054.0" cy="590.0" r="4.1"/><circle cx="1048.7" cy="578.2" r="4.1"/><circle cx="1008.7" cy="583.8" r="4.1"/><circle cx="1016.2" cy="593.8" r="4.1"/><circle cx="1022.4" cy="586.0" r="4.1"/><circle cx="1001.7" cy="572.4" r="4.1"/><circle cx="1050.8" cy="583.5" r="4.1"/><circle cx="1013.3" cy="575.7" r="4.1"/><circle cx="1015.8" cy="577.9" r="4.1"/><circle cx="1019.5" cy="573.9" r="4.1"/><circle cx="1043.0" cy="570.9" r="4.1"/><circle cx="1005.7" cy="588.0" r="4.1"/><circle cx="1051.5" cy="605.7" r="4.1"/><circle cx="1007.7" cy="583.6" r="4.1"/><circle cx="1044.1" cy="584.7" r="4.1"/><circle cx="1059.4" cy="576.5" r="4.1"/><circle cx="1012.1" cy="588.5" r="4.1"/><circle cx="1035.4" cy="584.3" r="4.1"/><circle cx="1013.4" cy="596.1" r="4.1"/><circle cx="1032.5" cy="579.5" r="4.1"/><circle cx="1047.3" cy="585.1" r="4.1"/><circle cx="1039.9" cy="594.1" r="4.1"/><circle cx="1017.5" cy="585.4" r="4.1"/><circle cx="1003.0" cy="575.0" r="4.1"/><circle cx="1052.4" cy="582.0" r="4.1"/><circle cx="1040.3" cy="571.7" r="4.1"/><circle cx="1033.8" cy="584.0" r="4.1"/><circle cx="1029.8" cy="580.8" r="4.1"/><circle cx="1001.7" cy="581.5" r="4.1"/><circle cx="1012.1" cy="572.5" r="4.1"/><circle cx="1043.7" cy="580.1" r="4.1"/><circle cx="1023.5" cy="610.8" r="4.1"/><circle cx="1047.5" cy="609.5" r="4.1"/><circle cx="1053.1" cy="572.8" r="4.1"/><circle cx="1041.3" cy="598.8" r="4.1"/><circle cx="1020.2" cy="586.5" r="4.1"/><circle cx="1040.0" cy="600.5" r="4.1"/><circle cx="1020.2" cy="597.1" r="4.1"/><circle cx="1009.2" cy="572.0" r="4.1"/><circle cx="1043.5" cy="568.3" r="4.1"/><circle cx="1000.0" cy="574.2" r="4.1"/><circle cx="1010.2" cy="581.1" r="4.1"/><circle cx="1017.5" cy="597.5" r="4.1"/><circle cx="1034.3" cy="601.4" r="4.1"/><circle cx="1013.9" cy="587.6" r="4.1"/><circle cx="1041.7" cy="583.4" r="4.1"/><circle cx="1047.6" cy="580.3" r="4.1"/><circle cx="1036.7" cy="568.6" r="4.1"/><circle cx="1013.2" cy="571.8" r="4.1"/><circle cx="1048.6" cy="576.6" r="4.1"/><circle cx="1022.9" cy="602.9" r="4.1"/><circle cx="1051.0" cy="580.1" r="4.1"/><circle cx="999.1" cy="571.3" r="4.1"/><circle cx="1007.0" cy="570.4" r="4.1"/><circle cx="1012.4" cy="568.7" r="4.1"/><circle cx="1016.0" cy="568.6" r="4.1"/><circle cx="1023.6" cy="567.4" r="4.1"/><circle cx="1027.2" cy="569.0" r="4.1"/><circle cx="1033.5" cy="568.3" r="4.1"/><circle cx="1040.8" cy="567.9" r="4.1"/><circle cx="1042.8" cy="567.0" r="4.1"/><circle cx="1049.5" cy="566.2" r="4.1"/><circle cx="1055.9" cy="567.1" r="4.1"/><circle cx="1058.2" cy="571.3" r="4.1"/><circle cx="1063.0" cy="575.8" r="4.1"/><circle cx="1061.2" cy="580.0" r="4.1"/><circle cx="1057.6" cy="588.0" r="4.1"/><circle cx="1057.3" cy="591.4" r="4.1"/><circle cx="1055.5" cy="598.4" r="4.1"/><circle cx="1055.0" cy="603.5" r="4.1"/><circle cx="1052.1" cy="607.7" r="4.1"/><circle cx="1047.3" cy="609.7" r="4.1"/><circle cx="1040.8" cy="612.5" r="4.1"/><circle cx="1036.4" cy="614.8" r="4.1"/><circle cx="1028.7" cy="613.7" r="4.1"/><circle cx="1022.2" cy="611.8" r="4.1"/><circle cx="1019.1" cy="609.5" r="4.1"/><circle cx="1014.7" cy="605.9" r="4.1"/><circle cx="1011.2" cy="598.3" r="4.1"/><circle cx="1007.3" cy="592.5" r="4.1"/><circle cx="1005.0" cy="586.7" r="4.1"/><circle cx="1001.9" cy="583.0" r="4.1"/><circle cx="1000.6" cy="576.3" r="4.1"/><circle cx="1049.7" cy="543.8" r="4.1"/><circle cx="1055.3" cy="545.3" r="4.1"/><circle cx="1048.3" cy="536.2" r="4.1"/><circle cx="1054.9" cy="538.2" r="4.1"/><circle cx="1056.8" cy="545.2" r="4.1"/><circle cx="1051.7" cy="549.2" r="4.1"/><circle cx="1048.7" cy="541.3" r="4.1"/><circle cx="730.0" cy="176.2" r="4.1"/><circle cx="736.2" cy="176.9" r="4.1"/><circle cx="705.4" cy="609.4" r="4.1"/><circle cx="739.7" cy="600.6" r="4.1"/><circle cx="949.5" cy="609.4" r="4.1"/><circle cx="976.5" cy="611.4" r="4.1"/><circle cx="989.7" cy="609.4" r="4.1"/><circle cx="612.0" cy="353.0" r="4.1"/><circle cx="1073.0" cy="571.0" r="4.1"/><circle cx="1095.0" cy="571.0" r="4.1"/><circle cx="1102.5" cy="568.7" r="4.1"/><circle cx="891.7" cy="490.3" r="4.1"/><circle cx="933.3" cy="506.5" r="4.1"/><circle cx="948.0" cy="526.0" r="4.1"/><circle cx="972.5" cy="540.8" r="4.1"/><circle cx="987.3" cy="549.1" r="4.1"/><circle cx="992.2" cy="566.3" r="4.1"/><circle cx="722.5" cy="483.0" r="4.1"/><circle cx="740.7" cy="480.5" r="4.1"/><circle cx="788.7" cy="473.0" r="4.1"/><circle cx="815.7" cy="463.3" r="4.1"/><circle cx="823.0" cy="461.0" r="4.1"/><circle cx="840.2" cy="468.2" r="4.1"/><circle cx="852.5" cy="458.4" r="4.1"/><circle cx="719.2" cy="245.5" r="4.1"/><circle cx="720.0" cy="245.9" r="4.1"/><circle cx="721.4" cy="248.6" r="4.1"/><circle cx="722.8" cy="250.4" r="4.1"/><circle cx="725.1" cy="251.1" r="4.1"/><circle cx="729.6" cy="251.5" r="4.1"/><circle cx="728.9" cy="254.0" r="4.1"/><circle cx="731.4" cy="256.3" r="4.1"/><circle cx="732.9" cy="258.1" r="4.1"/><circle cx="737.5" cy="259.4" r="4.1"/><circle cx="738.3" cy="259.3" r="4.1"/><circle cx="741.1" cy="261.5" r="4.1"/><circle cx="742.4" cy="262.4" r="4.1"/><circle cx="744.5" cy="264.8" r="4.1"/><circle cx="740.3" cy="244.7" r="4.1"/><circle cx="736.2" cy="244.5" r="4.1"/><circle cx="735.0" cy="246.9" r="4.1"/><circle cx="732.7" cy="247.4" r="4.1"/><circle cx="729.8" cy="249.4" r="4.1"/><circle cx="728.9" cy="252.9" r="4.1"/><circle cx="728.2" cy="254.2" r="4.1"/><circle cx="726.3" cy="256.1" r="4.1"/><circle cx="723.2" cy="257.2" r="4.1"/><circle cx="719.4" cy="258.4" r="4.1"/><circle cx="719.0" cy="258.9" r="4.1"/><circle cx="716.8" cy="262.5" r="4.1"/><circle cx="714.5" cy="263.1" r="4.1"/><circle cx="711.9" cy="263.8" r="4.1"/><circle cx="701.2" cy="267.6" r="4.1"/><circle cx="700.9" cy="271.4" r="4.1"/><circle cx="703.4" cy="271.6" r="4.1"/><circle cx="705.9" cy="274.3" r="4.1"/><circle cx="707.4" cy="276.3" r="4.1"/><circle cx="709.1" cy="278.7" r="4.1"/><circle cx="710.5" cy="279.2" r="4.1"/><circle cx="711.6" cy="283.5" r="4.1"/><circle cx="714.5" cy="283.0" r="4.1"/><circle cx="717.3" cy="285.4" r="4.1"/><circle cx="716.8" cy="288.1" r="4.1"/><circle cx="667.3" cy="296.0" r="4.1"/><circle cx="670.6" cy="294.5" r="4.1"/><circle cx="673.2" cy="293.5" r="4.1"/><circle cx="675.5" cy="294.2" r="4.1"/><circle cx="676.6" cy="293.0" r="4.1"/><circle cx="679.1" cy="292.4" r="4.1"/><circle cx="683.9" cy="292.0" r="4.1"/><circle cx="686.0" cy="292.0" r="4.1"/><circle cx="686.6" cy="292.0" r="4.1"/><circle cx="690.9" cy="288.6" r="4.1"/><circle cx="693.7" cy="288.8" r="4.1"/><circle cx="694.2" cy="289.9" r="4.1"/><circle cx="697.9" cy="288.6" r="4.1"/><circle cx="699.1" cy="287.9" r="4.1"/><circle cx="701.3" cy="285.6" r="4.1"/><circle cx="704.7" cy="284.3" r="4.1"/><circle cx="707.9" cy="284.2" r="4.1"/><circle cx="709.5" cy="285.0" r="4.1"/><circle cx="712.3" cy="284.9" r="4.1"/><circle cx="715.4" cy="284.1" r="4.1"/><circle cx="712.2" cy="274.3" r="4.1"/><circle cx="711.3" cy="273.8" r="4.1"/><circle cx="709.1" cy="276.2" r="4.1"/><circle cx="707.3" cy="279.0" r="4.1"/><circle cx="705.6" cy="279.2" r="4.1"/><circle cx="702.5" cy="282.9" r="4.1"/><circle cx="702.3" cy="284.7" r="4.1"/><circle cx="697.8" cy="286.1" r="4.1"/><circle cx="696.1" cy="287.8" r="4.1"/><circle cx="696.4" cy="288.3" r="4.1"/><circle cx="694.9" cy="291.9" r="4.1"/><circle cx="691.1" cy="292.2" r="4.1"/><circle cx="689.8" cy="296.0" r="4.1"/><circle cx="997.8" cy="171.9" r="4.1"/><circle cx="1006.7" cy="175.0" r="4.1"/><circle cx="1002.4" cy="176.0" r="4.1"/><circle cx="1000.2" cy="186.1" r="4.1"/><circle cx="999.6" cy="182.7" r="4.1"/><circle cx="999.9" cy="176.4" r="4.1"/><circle cx="999.9" cy="179.3" r="4.1"/><circle cx="1001.9" cy="173.9" r="4.1"/><circle cx="1002.0" cy="183.0" r="4.1"/><circle cx="998.7" cy="185.3" r="4.1"/><circle cx="1002.4" cy="186.6" r="4.1"/><circle cx="1002.7" cy="174.7" r="4.1"/><circle cx="998.2" cy="180.6" r="4.1"/><circle cx="1001.2" cy="196.5" r="4.1"/><circle cx="995.4" cy="192.6" r="4.1"/><circle cx="1000.0" cy="188.5" r="4.1"/><circle cx="994.0" cy="201.5" r="4.1"/><circle cx="994.7" cy="191.4" r="4.1"/><circle cx="994.4" cy="194.6" r="4.1"/><circle cx="998.9" cy="201.6" r="4.1"/><circle cx="999.1" cy="188.6" r="4.1"/><circle cx="1007.4" cy="200.1" r="4.1"/><circle cx="998.5" cy="197.0" r="4.1"/><circle cx="1009.9" cy="211.7" r="4.1"/><circle cx="998.0" cy="206.0" r="4.1"/><circle cx="1005.4" cy="208.5" r="4.1"/><circle cx="1003.2" cy="208.0" r="4.1"/><circle cx="999.4" cy="205.8" r="4.1"/><circle cx="998.7" cy="208.6" r="4.1"/><circle cx="996.3" cy="207.3" r="4.1"/><circle cx="1001.4" cy="200.0" r="4.1"/><circle cx="1000.6" cy="209.3" r="4.1"/><circle cx="996.3" cy="204.5" r="4.1"/><circle cx="1004.0" cy="210.5" r="4.1"/><circle cx="1005.1" cy="218.3" r="4.1"/><circle cx="1003.3" cy="217.1" r="4.1"/><circle cx="1008.7" cy="225.4" r="4.1"/><circle cx="1005.2" cy="226.0" r="4.1"/><circle cx="1005.1" cy="220.4" r="4.1"/><circle cx="1000.0" cy="217.1" r="4.1"/><circle cx="1003.9" cy="218.0" r="4.1"/><circle cx="1007.1" cy="214.9" r="4.1"/><circle cx="1009.5" cy="223.0" r="4.1"/><circle cx="1013.2" cy="235.0" r="4.1"/><circle cx="1019.1" cy="233.5" r="4.1"/><circle cx="1012.0" cy="226.1" r="4.1"/><circle cx="1021.1" cy="232.9" r="4.1"/><circle cx="1013.2" cy="228.2" r="4.1"/><circle cx="1017.5" cy="231.4" r="4.1"/><circle cx="1011.7" cy="223.2" r="4.1"/><circle cx="1010.7" cy="224.0" r="4.1"/><circle cx="1014.0" cy="234.1" r="4.1"/><circle cx="1012.1" cy="232.9" r="4.1"/><circle cx="1019.4" cy="237.6" r="4.1"/><circle cx="1016.4" cy="231.8" r="4.1"/><circle cx="1023.2" cy="238.7" r="4.1"/><circle cx="1026.7" cy="236.6" r="4.1"/><circle cx="1026.6" cy="246.2" r="4.1"/><circle cx="1028.1" cy="247.0" r="4.1"/><circle cx="1029.3" cy="239.0" r="4.1"/><circle cx="1027.7" cy="249.2" r="4.1"/><circle cx="1034.0" cy="251.3" r="4.1"/><circle cx="1024.5" cy="240.9" r="4.1"/><circle cx="1021.5" cy="236.7" r="4.1"/><circle cx="1034.2" cy="245.1" r="4.1"/><circle cx="1033.7" cy="237.1" r="4.1"/><circle cx="1020.4" cy="238.5" r="4.1"/><circle cx="1029.1" cy="262.3" r="4.1"/><circle cx="1034.1" cy="266.4" r="4.1"/><circle cx="1033.3" cy="263.3" r="4.1"/><circle cx="1026.6" cy="256.7" r="4.1"/><circle cx="1036.2" cy="266.1" r="4.1"/><circle cx="1031.9" cy="262.3" r="4.1"/><circle cx="1033.1" cy="256.2" r="4.1"/><circle cx="1032.9" cy="252.5" r="4.1"/><circle cx="1031.3" cy="258.5" r="4.1"/><circle cx="1035.4" cy="250.5" r="4.1"/><circle cx="1038.2" cy="264.5" r="4.1"/><circle cx="1033.2" cy="272.4" r="4.1"/><circle cx="1035.6" cy="270.3" r="4.1"/><circle cx="1040.8" cy="275.4" r="4.1"/><circle cx="1036.8" cy="276.2" r="4.1"/><circle cx="1039.9" cy="279.8" r="4.1"/><circle cx="1035.5" cy="281.4" r="4.1"/><circle cx="1037.4" cy="271.7" r="4.1"/><circle cx="1039.5" cy="276.8" r="4.1"/><circle cx="1038.5" cy="273.2" r="4.1"/><circle cx="1041.4" cy="279.4" r="4.1"/><circle cx="1042.4" cy="277.0" r="4.1"/><circle cx="1041.2" cy="288.0" r="4.1"/><circle cx="1048.5" cy="273.4" r="4.1"/><circle cx="1042.2" cy="282.9" r="4.1"/><circle cx="1040.9" cy="283.4" r="4.1"/><circle cx="1045.4" cy="283.4" r="4.1"/><circle cx="1049.4" cy="287.4" r="4.1"/><circle cx="1042.9" cy="284.1" r="4.1"/><circle cx="1047.3" cy="289.6" r="4.1"/><circle cx="1045.1" cy="286.0" r="4.1"/><circle cx="1042.9" cy="278.7" r="4.1"/><circle cx="1047.6" cy="274.9" r="4.1"/><circle cx="1053.4" cy="295.3" r="4.1"/><circle cx="1060.1" cy="294.2" r="4.1"/><circle cx="1040.8" cy="300.8" r="4.1"/><circle cx="1053.8" cy="294.0" r="4.1"/><circle cx="1058.5" cy="298.2" r="4.1"/><circle cx="1048.9" cy="295.6" r="4.1"/><circle cx="1047.0" cy="295.6" r="4.1"/><circle cx="1055.0" cy="295.7" r="4.1"/><circle cx="1057.1" cy="287.3" r="4.1"/><circle cx="1062.5" cy="290.0" r="4.1"/><circle cx="1059.3" cy="297.8" r="4.1"/><circle cx="1048.7" cy="297.5" r="4.1"/><circle cx="1053.8" cy="301.8" r="4.1"/><circle cx="1057.6" cy="288.6" r="4.1"/><circle cx="1056.9" cy="287.4" r="4.1"/><circle cx="1053.9" cy="297.2" r="4.1"/><circle cx="1045.9" cy="298.6" r="4.1"/><circle cx="1065.7" cy="290.5" r="4.1"/><circle cx="1056.9" cy="288.0" r="4.1"/><circle cx="1069.3" cy="295.6" r="4.1"/><circle cx="1063.3" cy="295.5" r="4.1"/><circle cx="1068.5" cy="299.7" r="4.1"/><circle cx="1059.7" cy="300.9" r="4.1"/><circle cx="1056.9" cy="309.0" r="4.1"/><circle cx="1064.0" cy="301.8" r="4.1"/><circle cx="1067.6" cy="300.8" r="4.1"/><circle cx="1060.8" cy="300.0" r="4.1"/><circle cx="1076.8" cy="292.6" r="4.1"/><circle cx="1061.9" cy="303.2" r="4.1"/><circle cx="1067.6" cy="304.7" r="4.1"/><circle cx="1063.2" cy="302.3" r="4.1"/><circle cx="1064.0" cy="297.2" r="4.1"/><circle cx="1068.0" cy="298.3" r="4.1"/><circle cx="1052.9" cy="313.7" r="4.1"/><circle cx="1061.8" cy="301.4" r="4.1"/><circle cx="1056.4" cy="302.1" r="4.1"/><circle cx="1056.4" cy="301.4" r="4.1"/><circle cx="1054.4" cy="307.3" r="4.1"/><circle cx="1063.1" cy="300.8" r="4.1"/><circle cx="1068.4" cy="298.3" r="4.1"/><circle cx="1071.5" cy="307.3" r="4.1"/><circle cx="1060.0" cy="313.7" r="4.1"/><circle cx="1062.0" cy="314.5" r="4.1"/><circle cx="1067.0" cy="316.2" r="4.1"/><circle cx="1066.2" cy="310.0" r="4.1"/><circle cx="1072.5" cy="308.4" r="4.1"/><circle cx="1068.0" cy="307.8" r="4.1"/><circle cx="1070.7" cy="312.1" r="4.1"/><circle cx="1061.4" cy="319.4" r="4.1"/><circle cx="1068.6" cy="312.1" r="4.1"/><circle cx="1059.2" cy="315.0" r="4.1"/><circle cx="1057.2" cy="316.7" r="4.1"/><circle cx="1075.2" cy="312.8" r="4.1"/><circle cx="1053.2" cy="324.4" r="4.1"/><circle cx="1058.8" cy="321.3" r="4.1"/><circle cx="1072.1" cy="310.8" r="4.1"/><circle cx="1067.1" cy="314.9" r="4.1"/><circle cx="1069.4" cy="315.5" r="4.1"/><circle cx="1074.7" cy="311.1" r="4.1"/><circle cx="1074.0" cy="318.5" r="4.1"/><circle cx="1072.4" cy="312.5" r="4.1"/><circle cx="1060.4" cy="321.8" r="4.1"/><circle cx="1077.3" cy="303.0" r="4.1"/><circle cx="1065.2" cy="320.3" r="4.1"/><circle cx="1064.2" cy="311.6" r="4.1"/><circle cx="1067.9" cy="307.8" r="4.1"/><circle cx="1063.4" cy="317.6" r="4.1"/><circle cx="1058.2" cy="318.5" r="4.1"/><circle cx="1049.6" cy="325.6" r="4.1"/><circle cx="1068.4" cy="339.5" r="4.1"/><circle cx="1094.1" cy="310.2" r="4.1"/><circle cx="1071.9" cy="325.7" r="4.1"/><circle cx="1068.6" cy="328.9" r="4.1"/><circle cx="1069.4" cy="332.0" r="4.1"/><circle cx="1064.1" cy="327.4" r="4.1"/><circle cx="1070.7" cy="337.6" r="4.1"/><circle cx="1066.8" cy="328.2" r="4.1"/><circle cx="1075.7" cy="326.4" r="4.1"/><circle cx="1074.1" cy="329.8" r="4.1"/><circle cx="1082.7" cy="329.7" r="4.1"/><circle cx="1065.2" cy="326.6" r="4.1"/><circle cx="1074.0" cy="329.6" r="4.1"/><circle cx="1075.3" cy="323.1" r="4.1"/><circle cx="1087.9" cy="323.6" r="4.1"/><circle cx="1087.7" cy="317.3" r="4.1"/><circle cx="1075.4" cy="319.0" r="4.1"/><circle cx="1074.4" cy="330.7" r="4.1"/><circle cx="1073.8" cy="330.3" r="4.1"/><circle cx="1080.9" cy="331.1" r="4.1"/><circle cx="1083.9" cy="324.2" r="4.1"/><circle cx="1071.1" cy="326.7" r="4.1"/><circle cx="1075.7" cy="334.9" r="4.1"/><circle cx="1068.1" cy="325.3" r="4.1"/><circle cx="1090.6" cy="314.3" r="4.1"/><circle cx="1073.9" cy="323.9" r="4.1"/><circle cx="1074.3" cy="319.9" r="4.1"/><circle cx="1071.8" cy="321.5" r="4.1"/><circle cx="1071.5" cy="331.8" r="4.1"/><circle cx="1085.6" cy="329.9" r="4.1"/><circle cx="1090.9" cy="324.6" r="4.1"/><circle cx="1082.4" cy="346.3" r="4.1"/><circle cx="1083.2" cy="340.1" r="4.1"/><circle cx="1076.0" cy="345.7" r="4.1"/><circle cx="1084.7" cy="335.2" r="4.1"/><circle cx="1090.1" cy="324.8" r="4.1"/><circle cx="1096.8" cy="332.2" r="4.1"/><circle cx="1078.7" cy="342.7" r="4.1"/><circle cx="1091.4" cy="329.5" r="4.1"/><circle cx="1085.3" cy="329.2" r="4.1"/><circle cx="1078.6" cy="343.1" r="4.1"/><circle cx="1073.1" cy="342.2" r="4.1"/><circle cx="1088.3" cy="328.3" r="4.1"/><circle cx="1084.9" cy="328.7" r="4.1"/><circle cx="1087.7" cy="340.4" r="4.1"/><circle cx="1076.1" cy="337.7" r="4.1"/><circle cx="1083.8" cy="341.0" r="4.1"/><circle cx="1079.9" cy="345.7" r="4.1"/><circle cx="1083.1" cy="331.4" r="4.1"/><circle cx="1086.9" cy="338.7" r="4.1"/><circle cx="1082.8" cy="338.4" r="4.1"/><circle cx="1092.2" cy="339.7" r="4.1"/><circle cx="1093.0" cy="353.8" r="4.1"/><circle cx="1094.8" cy="337.7" r="4.1"/><circle cx="1108.8" cy="341.3" r="4.1"/><circle cx="1087.5" cy="345.6" r="4.1"/><circle cx="1095.9" cy="345.7" r="4.1"/><circle cx="1092.3" cy="339.2" r="4.1"/><circle cx="1089.5" cy="353.4" r="4.1"/><circle cx="1089.1" cy="345.1" r="4.1"/><circle cx="1093.2" cy="341.5" r="4.1"/><circle cx="1107.7" cy="332.1" r="4.1"/><circle cx="1095.1" cy="346.3" r="4.1"/><circle cx="1096.2" cy="347.4" r="4.1"/><circle cx="1082.1" cy="352.1" r="4.1"/><circle cx="1083.9" cy="346.5" r="4.1"/><circle cx="1099.1" cy="353.2" r="4.1"/><circle cx="1088.9" cy="356.2" r="4.1"/><circle cx="1092.7" cy="355.5" r="4.1"/><circle cx="1092.1" cy="343.0" r="4.1"/><circle cx="1095.8" cy="349.2" r="4.1"/><circle cx="1096.6" cy="353.8" r="4.1"/><circle cx="1095.5" cy="358.2" r="4.1"/><circle cx="1098.6" cy="355.1" r="4.1"/><circle cx="1091.8" cy="343.4" r="4.1"/><circle cx="1095.2" cy="351.7" r="4.1"/><circle cx="1087.8" cy="346.7" r="4.1"/><circle cx="1101.8" cy="334.1" r="4.1"/><circle cx="1093.9" cy="347.6" r="4.1"/><circle cx="1098.0" cy="351.3" r="4.1"/><circle cx="1097.9" cy="334.9" r="4.1"/><circle cx="1106.5" cy="343.3" r="4.1"/><circle cx="1088.1" cy="350.6" r="4.1"/><circle cx="1100.6" cy="353.5" r="4.1"/><circle cx="1101.7" cy="348.3" r="4.1"/><circle cx="1104.8" cy="346.9" r="4.1"/><circle cx="1110.1" cy="359.7" r="4.1"/><circle cx="1108.9" cy="367.0" r="4.1"/><circle cx="1114.3" cy="360.2" r="4.1"/><circle cx="1102.4" cy="355.8" r="4.1"/><circle cx="1097.5" cy="371.9" r="4.1"/><circle cx="1101.1" cy="357.9" r="4.1"/><circle cx="1093.1" cy="374.8" r="4.1"/><circle cx="1101.0" cy="368.2" r="4.1"/><circle cx="1112.3" cy="363.9" r="4.1"/><circle cx="1091.7" cy="373.6" r="4.1"/><circle cx="1097.3" cy="371.9" r="4.1"/><circle cx="1104.7" cy="364.7" r="4.1"/><circle cx="1102.9" cy="363.2" r="4.1"/><circle cx="1106.6" cy="354.3" r="4.1"/><circle cx="1096.1" cy="364.8" r="4.1"/><circle cx="1093.4" cy="360.8" r="4.1"/><circle cx="1089.5" cy="363.7" r="4.1"/><circle cx="1086.8" cy="364.1" r="4.1"/><circle cx="1099.8" cy="370.5" r="4.1"/><circle cx="1101.9" cy="367.4" r="4.1"/><circle cx="1105.0" cy="358.1" r="4.1"/><circle cx="1091.0" cy="364.6" r="4.1"/><circle cx="1096.3" cy="373.4" r="4.1"/><circle cx="1116.5" cy="358.8" r="4.1"/><circle cx="1102.7" cy="357.2" r="4.1"/><circle cx="1094.8" cy="359.3" r="4.1"/><circle cx="1106.7" cy="371.0" r="4.1"/><circle cx="1102.7" cy="369.6" r="4.1"/><circle cx="1105.9" cy="363.4" r="4.1"/><circle cx="1082.2" cy="370.6" r="4.1"/><circle cx="1096.3" cy="375.3" r="4.1"/><circle cx="1112.4" cy="377.8" r="4.1"/><circle cx="1095.6" cy="384.1" r="4.1"/><circle cx="1096.9" cy="382.2" r="4.1"/><circle cx="1110.9" cy="376.9" r="4.1"/><circle cx="1109.4" cy="372.4" r="4.1"/><circle cx="1113.4" cy="377.7" r="4.1"/><circle cx="1109.7" cy="385.4" r="4.1"/><circle cx="1104.8" cy="377.5" r="4.1"/><circle cx="1113.4" cy="385.6" r="4.1"/><circle cx="1096.3" cy="383.1" r="4.1"/><circle cx="1110.4" cy="377.4" r="4.1"/><circle cx="1101.8" cy="384.9" r="4.1"/><circle cx="1091.6" cy="383.6" r="4.1"/><circle cx="1107.1" cy="384.5" r="4.1"/><circle cx="1109.8" cy="377.4" r="4.1"/><circle cx="1090.2" cy="379.7" r="4.1"/><circle cx="1109.8" cy="380.4" r="4.1"/><circle cx="1096.9" cy="376.2" r="4.1"/><circle cx="1109.1" cy="385.3" r="4.1"/><circle cx="1100.7" cy="378.1" r="4.1"/><circle cx="1078.2" cy="382.4" r="4.1"/><circle cx="1101.3" cy="376.1" r="4.1"/><circle cx="1104.3" cy="387.3" r="4.1"/><circle cx="1095.8" cy="375.9" r="4.1"/><circle cx="1110.3" cy="394.7" r="4.1"/><circle cx="1101.9" cy="405.2" r="4.1"/><circle cx="1108.1" cy="403.7" r="4.1"/><circle cx="1113.8" cy="390.0" r="4.1"/><circle cx="1100.3" cy="396.4" r="4.1"/><circle cx="1092.2" cy="392.5" r="4.1"/><circle cx="1105.9" cy="405.3" r="4.1"/><circle cx="1116.0" cy="392.2" r="4.1"/><circle cx="1113.8" cy="387.8" r="4.1"/><circle cx="1105.4" cy="405.8" r="4.1"/><circle cx="1090.7" cy="391.9" r="4.1"/><circle cx="1103.9" cy="400.6" r="4.1"/><circle cx="1103.9" cy="403.2" r="4.1"/><circle cx="1093.7" cy="406.3" r="4.1"/><circle cx="1118.2" cy="400.8" r="4.1"/><circle cx="1092.3" cy="401.8" r="4.1"/><circle cx="1111.7" cy="394.9" r="4.1"/><circle cx="1103.7" cy="404.4" r="4.1"/><circle cx="1104.7" cy="397.4" r="4.1"/><circle cx="1106.2" cy="393.8" r="4.1"/><circle cx="1099.3" cy="395.3" r="4.1"/><circle cx="1095.6" cy="398.6" r="4.1"/><circle cx="1098.0" cy="398.5" r="4.1"/><circle cx="1092.3" cy="403.8" r="4.1"/><circle cx="1119.4" cy="400.4" r="4.1"/><circle cx="1110.0" cy="405.0" r="4.1"/><circle cx="1105.4" cy="403.4" r="4.1"/><circle cx="1105.6" cy="401.1" r="4.1"/><circle cx="1095.0" cy="399.2" r="4.1"/><circle cx="1103.2" cy="403.5" r="4.1"/><circle cx="1094.9" cy="391.3" r="4.1"/><circle cx="1113.7" cy="406.5" r="4.1"/><circle cx="1101.0" cy="421.1" r="4.1"/><circle cx="1101.1" cy="405.1" r="4.1"/><circle cx="1097.4" cy="407.3" r="4.1"/><circle cx="1108.9" cy="419.6" r="4.1"/><circle cx="1112.2" cy="408.4" r="4.1"/><circle cx="1101.5" cy="419.6" r="4.1"/><circle cx="1104.1" cy="413.3" r="4.1"/><circle cx="1116.4" cy="413.3" r="4.1"/><circle cx="1085.9" cy="420.2" r="4.1"/><circle cx="1106.0" cy="406.7" r="4.1"/><circle cx="1094.9" cy="413.4" r="4.1"/><circle cx="1093.3" cy="416.7" r="4.1"/><circle cx="1103.9" cy="417.5" r="4.1"/><circle cx="1113.6" cy="430.8" r="4.1"/><circle cx="1100.7" cy="427.1" r="4.1"/><circle cx="1107.2" cy="417.4" r="4.1"/><circle cx="1104.4" cy="416.2" r="4.1"/><circle cx="1095.7" cy="411.7" r="4.1"/><circle cx="1101.4" cy="414.4" r="4.1"/><circle cx="1089.3" cy="414.2" r="4.1"/><circle cx="1106.0" cy="410.7" r="4.1"/><circle cx="1098.4" cy="417.3" r="4.1"/><circle cx="1114.3" cy="430.5" r="4.1"/><circle cx="1097.9" cy="421.0" r="4.1"/><circle cx="1086.2" cy="403.0" r="4.1"/><circle cx="1104.5" cy="422.4" r="4.1"/><circle cx="1100.1" cy="410.8" r="4.1"/><circle cx="1090.8" cy="425.6" r="4.1"/><circle cx="1094.3" cy="404.4" r="4.1"/><circle cx="1086.0" cy="420.2" r="4.1"/><circle cx="1097.9" cy="406.6" r="4.1"/><circle cx="1113.8" cy="418.8" r="4.1"/><circle cx="1113.3" cy="428.8" r="4.1"/><circle cx="1106.1" cy="409.1" r="4.1"/><circle cx="1104.9" cy="418.9" r="4.1"/><circle cx="1113.1" cy="408.2" r="4.1"/><circle cx="1107.5" cy="442.4" r="4.1"/><circle cx="1106.1" cy="434.5" r="4.1"/><circle cx="1093.7" cy="436.4" r="4.1"/><circle cx="1102.0" cy="435.8" r="4.1"/><circle cx="1106.0" cy="429.5" r="4.1"/><circle cx="1109.4" cy="431.0" r="4.1"/><circle cx="1095.7" cy="433.0" r="4.1"/><circle cx="1087.1" cy="434.8" r="4.1"/><circle cx="1101.4" cy="436.3" r="4.1"/><circle cx="1078.5" cy="425.3" r="4.1"/><circle cx="1098.7" cy="434.8" r="4.1"/><circle cx="1090.6" cy="432.0" r="4.1"/><circle cx="1085.4" cy="431.9" r="4.1"/><circle cx="1097.2" cy="427.1" r="4.1"/><circle cx="1101.5" cy="433.2" r="4.1"/><circle cx="1094.1" cy="434.0" r="4.1"/><circle cx="1090.1" cy="430.3" r="4.1"/><circle cx="1096.4" cy="427.0" r="4.1"/><circle cx="1085.3" cy="435.6" r="4.1"/><circle cx="1089.0" cy="434.7" r="4.1"/><circle cx="1080.0" cy="436.0" r="4.1"/><circle cx="1097.7" cy="440.7" r="4.1"/><circle cx="1101.2" cy="444.9" r="4.1"/><circle cx="1080.1" cy="450.4" r="4.1"/><circle cx="1096.0" cy="454.4" r="4.1"/><circle cx="1096.1" cy="451.9" r="4.1"/><circle cx="1088.9" cy="453.4" r="4.1"/><circle cx="1080.8" cy="438.2" r="4.1"/><circle cx="1107.9" cy="444.5" r="4.1"/><circle cx="1107.0" cy="442.6" r="4.1"/><circle cx="1104.7" cy="450.9" r="4.1"/><circle cx="1098.7" cy="449.9" r="4.1"/><circle cx="1091.4" cy="439.7" r="4.1"/><circle cx="1096.7" cy="446.2" r="4.1"/><circle cx="1087.8" cy="449.4" r="4.1"/><circle cx="1080.4" cy="442.9" r="4.1"/><circle cx="1093.3" cy="449.4" r="4.1"/><circle cx="1094.7" cy="455.0" r="4.1"/><circle cx="1096.8" cy="445.5" r="4.1"/><circle cx="1075.0" cy="447.7" r="4.1"/><circle cx="1099.0" cy="446.4" r="4.1"/><circle cx="1101.0" cy="450.7" r="4.1"/><circle cx="1092.8" cy="451.2" r="4.1"/><circle cx="1095.6" cy="450.7" r="4.1"/><circle cx="1085.5" cy="445.2" r="4.1"/><circle cx="1078.7" cy="472.1" r="4.1"/><circle cx="1091.5" cy="475.2" r="4.1"/><circle cx="1082.0" cy="449.3" r="4.1"/><circle cx="1082.7" cy="472.2" r="4.1"/><circle cx="1081.9" cy="474.4" r="4.1"/><circle cx="1086.1" cy="470.0" r="4.1"/><circle cx="1083.9" cy="458.4" r="4.1"/><circle cx="1097.3" cy="468.3" r="4.1"/><circle cx="1096.1" cy="476.5" r="4.1"/><circle cx="1086.5" cy="478.1" r="4.1"/><circle cx="1084.4" cy="461.0" r="4.1"/><circle cx="1097.5" cy="462.6" r="4.1"/><circle cx="1090.2" cy="473.8" r="4.1"/><circle cx="1089.0" cy="476.5" r="4.1"/><circle cx="1086.9" cy="473.7" r="4.1"/><circle cx="1062.8" cy="456.1" r="4.1"/><circle cx="1088.7" cy="456.3" r="4.1"/><circle cx="1079.6" cy="465.2" r="4.1"/><circle cx="1082.7" cy="474.0" r="4.1"/><circle cx="1084.3" cy="476.2" r="4.1"/><circle cx="1078.4" cy="471.6" r="4.1"/><circle cx="1087.4" cy="458.4" r="4.1"/><circle cx="1091.7" cy="465.4" r="4.1"/><circle cx="1089.5" cy="471.2" r="4.1"/><circle cx="1086.0" cy="457.6" r="4.1"/><circle cx="1087.7" cy="470.4" r="4.1"/><circle cx="1062.0" cy="456.2" r="4.1"/><circle cx="1086.7" cy="468.9" r="4.1"/><circle cx="1087.6" cy="453.1" r="4.1"/><circle cx="1093.5" cy="454.7" r="4.1"/><circle cx="1093.1" cy="467.6" r="4.1"/><circle cx="1088.6" cy="470.7" r="4.1"/><circle cx="1089.2" cy="454.8" r="4.1"/><circle cx="1076.1" cy="456.8" r="4.1"/><circle cx="1098.1" cy="459.2" r="4.1"/><circle cx="1100.5" cy="467.2" r="4.1"/><circle cx="1095.9" cy="461.7" r="4.1"/><circle cx="1087.9" cy="473.5" r="4.1"/><circle cx="1095.5" cy="460.5" r="4.1"/><circle cx="1081.7" cy="452.7" r="4.1"/><circle cx="1080.2" cy="479.0" r="4.1"/><circle cx="1073.6" cy="495.8" r="4.1"/><circle cx="1077.7" cy="479.9" r="4.1"/><circle cx="1092.2" cy="480.8" r="4.1"/><circle cx="1089.8" cy="488.0" r="4.1"/><circle cx="1084.9" cy="480.8" r="4.1"/><circle cx="1076.0" cy="486.1" r="4.1"/><circle cx="1084.8" cy="483.3" r="4.1"/><circle cx="1074.0" cy="491.0" r="4.1"/><circle cx="1080.1" cy="480.1" r="4.1"/><circle cx="1077.0" cy="489.3" r="4.1"/><circle cx="1073.0" cy="493.0" r="4.1"/><circle cx="1074.1" cy="478.7" r="4.1"/><circle cx="1073.1" cy="483.0" r="4.1"/><circle cx="1082.8" cy="478.9" r="4.1"/><circle cx="1081.4" cy="487.3" r="4.1"/><circle cx="1078.5" cy="477.7" r="4.1"/><circle cx="1075.9" cy="482.3" r="4.1"/><circle cx="1082.4" cy="478.2" r="4.1"/><circle cx="1069.3" cy="488.6" r="4.1"/><circle cx="1067.7" cy="490.6" r="4.1"/><circle cx="1069.8" cy="505.5" r="4.1"/><circle cx="1065.9" cy="499.0" r="4.1"/><circle cx="1082.8" cy="503.9" r="4.1"/><circle cx="1075.2" cy="498.7" r="4.1"/><circle cx="1073.6" cy="502.7" r="4.1"/><circle cx="1080.6" cy="500.7" r="4.1"/><circle cx="1066.7" cy="504.0" r="4.1"/><circle cx="1075.3" cy="506.6" r="4.1"/><circle cx="1078.8" cy="506.6" r="4.1"/><circle cx="1074.9" cy="506.2" r="4.1"/><circle cx="1070.3" cy="507.9" r="4.1"/><circle cx="1083.6" cy="512.6" r="4.1"/><circle cx="1077.6" cy="504.5" r="4.1"/><circle cx="1078.1" cy="508.7" r="4.1"/><circle cx="1070.9" cy="497.8" r="4.1"/><circle cx="1075.9" cy="500.0" r="4.1"/><circle cx="1069.0" cy="509.3" r="4.1"/><circle cx="1072.9" cy="509.0" r="4.1"/><circle cx="1058.1" cy="512.5" r="4.1"/><circle cx="1073.9" cy="518.1" r="4.1"/><circle cx="1070.9" cy="518.2" r="4.1"/><circle cx="1068.8" cy="520.1" r="4.1"/><circle cx="1075.3" cy="516.8" r="4.1"/><circle cx="1076.9" cy="517.9" r="4.1"/><circle cx="1067.7" cy="513.6" r="4.1"/><circle cx="1058.7" cy="519.8" r="4.1"/><circle cx="1067.1" cy="525.1" r="4.1"/><circle cx="1067.5" cy="521.0" r="4.1"/><circle cx="1058.7" cy="527.3" r="4.1"/><circle cx="1068.9" cy="529.6" r="4.1"/><circle cx="1068.8" cy="518.5" r="4.1"/><circle cx="1062.4" cy="520.3" r="4.1"/><circle cx="1067.5" cy="534.6" r="4.1"/><circle cx="1074.9" cy="529.1" r="4.1"/><circle cx="1066.3" cy="523.3" r="4.1"/><circle cx="1071.2" cy="520.1" r="4.1"/><circle cx="1071.4" cy="526.0" r="4.1"/><circle cx="1069.0" cy="528.6" r="4.1"/><circle cx="1065.4" cy="530.8" r="4.1"/><circle cx="1051.7" cy="530.6" r="4.1"/><circle cx="1049.3" cy="532.4" r="4.1"/><circle cx="1060.8" cy="531.8" r="4.1"/><circle cx="1053.1" cy="529.7" r="4.1"/><circle cx="1058.5" cy="528.0" r="4.1"/><circle cx="1053.5" cy="535.0" r="4.1"/><circle cx="1052.4" cy="527.6" r="4.1"/><circle cx="1051.3" cy="533.9" r="4.1"/><circle cx="1036.5" cy="533.8" r="4.1"/><circle cx="1043.9" cy="531.7" r="4.1"/><circle cx="1040.9" cy="534.3" r="4.1"/><circle cx="1040.7" cy="522.7" r="4.1"/><circle cx="1043.5" cy="532.9" r="4.1"/><circle cx="1041.3" cy="532.2" r="4.1"/><circle cx="1042.5" cy="529.3" r="4.1"/><circle cx="1041.7" cy="528.9" r="4.1"/><circle cx="1030.4" cy="531.9" r="4.1"/><circle cx="1015.1" cy="534.0" r="4.1"/><circle cx="1023.7" cy="531.1" r="4.1"/><circle cx="1023.7" cy="535.4" r="4.1"/><circle cx="1026.2" cy="537.6" r="4.1"/><circle cx="1019.5" cy="540.0" r="4.1"/><circle cx="1020.7" cy="540.3" r="4.1"/><circle cx="1029.1" cy="536.2" r="4.1"/><circle cx="1017.4" cy="534.6" r="4.1"/><circle cx="1017.8" cy="539.4" r="4.1"/><circle cx="1005.8" cy="541.2" r="4.1"/><circle cx="1009.6" cy="536.7" r="4.1"/><circle cx="1002.8" cy="540.8" r="4.1"/><circle cx="1010.3" cy="536.1" r="4.1"/><circle cx="1012.1" cy="526.1" r="4.1"/><circle cx="998.9" cy="543.1" r="4.1"/><circle cx="1005.2" cy="537.1" r="4.1"/><circle cx="1007.6" cy="539.8" r="4.1"/><circle cx="1013.1" cy="537.2" r="4.1"/><circle cx="986.4" cy="538.0" r="4.1"/><circle cx="987.6" cy="529.6" r="4.1"/><circle cx="990.8" cy="533.8" r="4.1"/><circle cx="997.5" cy="539.3" r="4.1"/><circle cx="985.6" cy="536.5" r="4.1"/><circle cx="982.8" cy="538.2" r="4.1"/><circle cx="996.8" cy="538.9" r="4.1"/><circle cx="982.0" cy="540.1" r="4.1"/><circle cx="994.5" cy="537.6" r="4.1"/><circle cx="996.9" cy="536.4" r="4.1"/><circle cx="978.6" cy="534.7" r="4.1"/><circle cx="975.7" cy="530.1" r="4.1"/><circle cx="971.1" cy="531.6" r="4.1"/><circle cx="975.8" cy="535.7" r="4.1"/><circle cx="972.1" cy="529.9" r="4.1"/><circle cx="975.8" cy="534.8" r="4.1"/><circle cx="977.1" cy="532.9" r="4.1"/></g>
<style>.ml{font-family:"Liberation Sans",sans-serif;paint-order:stroke;stroke:#fff;stroke-opacity:.75;stroke-width:2.5px;stroke-linejoin:round}.cty{font-size:11px;fill:#5e4c38}.sea{font-size:11px;font-style:italic;fill:#566e90;stroke:#a4bedd;stroke-opacity:.6}.cnt{font-size:14.2px;font-weight:bold;fill:#000}.st{font-size:10.5px;font-weight:bold;fill:#5f5040}</style>
<g class="ml">
<text x="578.5" y="106.5" class="cty" text-anchor="middle">Jakarta</text>
<text x="578.5" y="118" class="cty" text-anchor="middle">Capital</text>
<text x="578.5" y="127.5" class="cty" text-anchor="middle">Region</text>
<circle cx="578.7" cy="132.7" r="2" fill="none" stroke="#5b5046" stroke-width="1"/>
<text x="639.5" y="124" class="sea" text-anchor="middle">Java Sea</text>
<text x="755.5" y="117" class="cnt" text-anchor="middle">Indonesia</text>
<text x="804" y="130.5" class="sea" text-anchor="middle">Banda Sea</text>
<text x="788" y="65.5" class="sea" text-anchor="middle">Molucca</text>
<text x="788" y="76.5" class="sea" text-anchor="middle">Sea</text>
<text x="735" y="63" class="sea" text-anchor="middle">Tomini</text>
<text x="1004.5" y="136" class="cnt" text-anchor="middle">Papua New</text>
<text x="1004.5" y="149" class="cnt" text-anchor="middle">Guinea</text>
<text x="1043" y="102.5" class="sea" text-anchor="middle">Bismarck</text>
<text x="1043" y="112.5" class="sea" text-anchor="middle">Sea</text>
<text x="913" y="160.5" class="sea" text-anchor="middle">Arafura</text>
<text x="913" y="170.5" class="sea" text-anchor="middle">Sea</text>
<text x="819" y="195.5" class="sea" text-anchor="middle">Timor Sea</text>
<text x="852" y="216.5" class="cty" text-anchor="middle">Darwin</text>
<circle cx="851.3" cy="205.3" r="2" fill="none" stroke="#5b5046" stroke-width="1"/>
<text x="1128.5" y="163" class="sea" text-anchor="middle">Solomon</text>
<text x="1127" y="173.5" class="sea" text-anchor="middle">Sea</text>
<text x="1136" y="290" class="sea" text-anchor="middle">Coral Sea</text>
<text x="882.5" y="287" class="st" text-anchor="middle">Northern</text>
<text x="883.5" y="297" class="st" text-anchor="middle">Territory</text>
<text x="1004.5" y="333" class="st" text-anchor="middle">Queensland</text>
<text x="891" y="362" class="cnt" text-anchor="middle">Australia</text>
<text x="1104" y="382" class="cty" text-anchor="middle">Brisbane</text>
<circle cx="1103.2" cy="387.2" r="2" fill="none" stroke="#5b5046" stroke-width="1"/>
<text x="753" y="373" class="st" text-anchor="middle">Western</text>
<text x="752.5" y="382.7" class="st" text-anchor="middle">Australia</text>
<text x="897.5" y="419" class="st" text-anchor="middle">South</text>
<text x="897.5" y="428" class="st" text-anchor="middle">Australia</text>
<text x="681.5" y="442.3" class="cty" text-anchor="middle">Perth</text>
<circle cx="680.9" cy="446.7" r="2" fill="none" stroke="#5b5046" stroke-width="1"/>
<text x="940.5" y="498.6" class="cty" text-anchor="middle">Adelaide</text>
<circle cx="939.7" cy="486.4" r="2" fill="none" stroke="#5b5046" stroke-width="1"/>
<text x="1026.7" y="453.5" class="st" text-anchor="middle">New South</text>
<text x="1036" y="463.3" class="st" text-anchor="middle">Wales</text>
<text x="1084.3" y="468.2" class="cty" text-anchor="middle">Sydney</text>
<circle cx="1083.3" cy="472.2" r="2" fill="none" stroke="#5b5046" stroke-width="1"/>
<text x="1060" y="487.8" class="cty" text-anchor="middle">Canberra</text>
<circle cx="1059.8" cy="491.3" r="2" fill="none" stroke="#5b5046" stroke-width="1"/>
<text x="1099" y="502.5" class="st" text-anchor="middle">Australian</text>
<text x="1099" y="512.4" class="st" text-anchor="middle">Capital</text>
<text x="1099" y="522.2" class="st" text-anchor="middle">Territory</text>
<text x="1002.7" y="518.7" class="st" text-anchor="middle">Victoria</text>
<text x="1012.5" y="538.3" class="cty" text-anchor="middle">Melbourne</text>
<circle cx="1011.8" cy="526.1" r="2" fill="none" stroke="#5b5046" stroke-width="1"/>
<text x="870.3" y="516.3" class="sea" text-anchor="middle">Great</text>
<text x="870.3" y="527" class="sea" text-anchor="middle">Australian</text>
<text x="871" y="537.8" class="sea" text-anchor="middle">Bight</text>
<text x="1029.7" y="591.8" class="st" text-anchor="middle">Tasmania</text>
<text x="1019" y="606.5" class="cty" text-anchor="middle">Hobart</text>
<circle cx="1039.7" cy="603" r="2" fill="none" stroke="#5b5046" stroke-width="1"/>
<text x="1351.3" y="509.7" class="cty" text-anchor="middle">Auckland</text>
<circle cx="1351.6" cy="512.5" r="2" fill="none" stroke="#5b5046" stroke-width="1"/>
<text x="1351.7" y="575" class="cty" text-anchor="middle">Wellington</text>
<circle cx="1351.6" cy="577.8" r="2" fill="none" stroke="#5b5046" stroke-width="1"/>
<text x="1324.7" y="593.5" class="cnt" text-anchor="middle">New</text>
<text x="1324" y="607.4" class="cnt" text-anchor="middle">Zealand</text>
<text x="1188.5" y="570.4" class="sea" text-anchor="middle">Tasman</text>
<text x="1190" y="580.6" class="sea" text-anchor="middle">Sea</text>
</g>
</svg>

<!-- map controls -->
<svg class="abs" style="left:400px;top:57px;z-index:5" width="60" height="380" viewBox="400 57 60 380">
 <defs><linearGradient id="bg" x1="0" y1="0" x2="0" y2="1"><stop offset="0" stop-color="#6a6a6a"/><stop offset=".5" stop-color="#3c3c3c"/><stop offset="1" stop-color="#262626"/></linearGradient></defs>
 <g stroke="#f4f4f4" stroke-width="1.3" fill="url(#bg)">
  <circle cx="430.3" cy="79.3" r="9.8"/><circle cx="419.3" cy="99.5" r="9.8"/><circle cx="441.5" cy="99.5" r="9.8"/><circle cx="430.3" cy="119.8" r="9.8"/>
  <circle cx="430.3" cy="170.7" r="9.8"/><circle cx="430.3" cy="391.2" r="9.8"/>
 </g>
 <g stroke="#fff" stroke-width="2" fill="none" stroke-linecap="square">
  <path d="M426.8 81 L430.3 77.5 L433.8 81"/><path d="M426.8 118 L430.3 121.5 L433.8 118"/>
  <path d="M421 96 L417.5 99.5 L421 103"/><path d="M439.8 96 L443.3 99.5 L439.8 103"/>
 </g>
 <path d="M425.5 170.7 H435.1 M430.3 165.9 V175.5" stroke="#fff" stroke-width="3"/>
 <path d="M425.5 391.2 H435.1" stroke="#fff" stroke-width="3"/>
 <circle cx="430" cy="146" r="6.8" fill="none" stroke="#3c3c3c" stroke-width="1.8"/>
 <path d="M430 137.5 V141 M430 151 V154.5 M421.5 146 H425 M435 146 H438.5" stroke="#3c3c3c" stroke-width="1.8"/>
 <g stroke="#f8f8f8" stroke-width="1.2" fill="none">
  <path d="M430.5 181 V381"/>
  <path d="M420 186 H441 M420.5 196 H440.5 M421 206 H440 M422 216.5 H439 M423 226.5 H438 M424 236.8 H437"/>
 </g>
 <path d="M427 241 H434 M427 246 H434 M427 251 H434 M427 256 H434 M427 261 H434 M427 266 H434 M427 271 H434 M427 276 H434 M427 281 H434 M427 286 H434 M427 291 H434 M427 296 H434 M427 301 H434 M427 316 H434 M427 321 H434 M427 326 H434 M427 331 H434 M427 336 H434 M427 341 H434 M427 346 H434 M427 351 H434 M427 356 H434 M427 361 H434 M427 366 H434 M427 371 H434 M427 376 H434 " stroke="#f8f8f8" stroke-width="1" fill="none"/>
 <rect x="421.3" y="305" width="20" height="8" rx="2" fill="#3a3a3a" stroke="#eee" stroke-width="1"/>
 <path d="M426.5 309 H436" stroke="#fff" stroke-width="2"/>
 <g fill="none" stroke="#555" stroke-width="1.2"><rect x="424" y="408.5" width="10" height="9" fill="#ddd"/><rect x="428" y="412.5" width="10" height="9" fill="#ccc"/></g>
</svg>

<!-- layer values panel -->
<div class="abs" style="left:1208px;top:652px;width:232px;height:74px;background:rgba(80,115,160,0.62);z-index:5"></div>
<div class="t" style="left:1214.5px;top:659px;font-size:10.3px;color:#f0f4f8;z-index:6;letter-spacing:0.3px">Layer values:</div>
<div class="t" style="left:1424px;top:660px;font-size:10px;color:#f0f4f8;z-index:6">x</div>
<div class="abs" style="left:1214px;top:671px;width:220px;height:1px;background:#e8eef4;z-index:6"></div>
<svg class="abs" style="left:1208px;top:680px;z-index:6" width="80" height="40"><g stroke="#eef2f6" stroke-width="1.6" fill="none"><path d="M10.8 8 V36 M10.8 21.7 H71.5 M71.5 8 V21.7 M50 21.7 V36"/></g></svg>
<div class="t" style="left:1232px;top:689.5px;font-size:10.4px;color:#eef2f6;z-index:6">500 km</div>
<div class="t" style="left:1222px;top:704px;font-size:10.4px;color:#eef2f6;z-index:6">200 mi</div>
<div class="t" style="left:1348.5px;top:689.5px;font-size:10.6px;color:#eef2f6;z-index:6">Lon: 164.49805</div>
<div class="t" style="left:1348.5px;top:702.5px;font-size:10.6px;color:#eef2f6;z-index:6">Lat: -28.83890</div>
<!-- bottom bar -->
<div class="abs" style="left:400px;top:733px;width:1040px;height:12px;background:#f3f2f0;z-index:5"></div>
<div class="abs" style="left:400px;top:733px;width:10px;height:12px;background:linear-gradient(90deg,#d0d0d0,#f3f2f0);z-index:5"></div>
<div class="t" style="left:1191px;top:734.5px;font-size:10.7px;color:#222;z-index:6">Map data ©2012 Google, MapIT, Tele Atlas, ZENRIN</div>
<div class="t" style="left:403px;top:718px;font-size:21px;font-family:'Liberation Serif',serif;color:#fff;z-index:4;text-shadow:0 0 1px #555,1px 1px 1px #777;letter-spacing:-0.4px;transform:scaleX(1.02);transform-origin:0 0">Google</div>

</body></html>
